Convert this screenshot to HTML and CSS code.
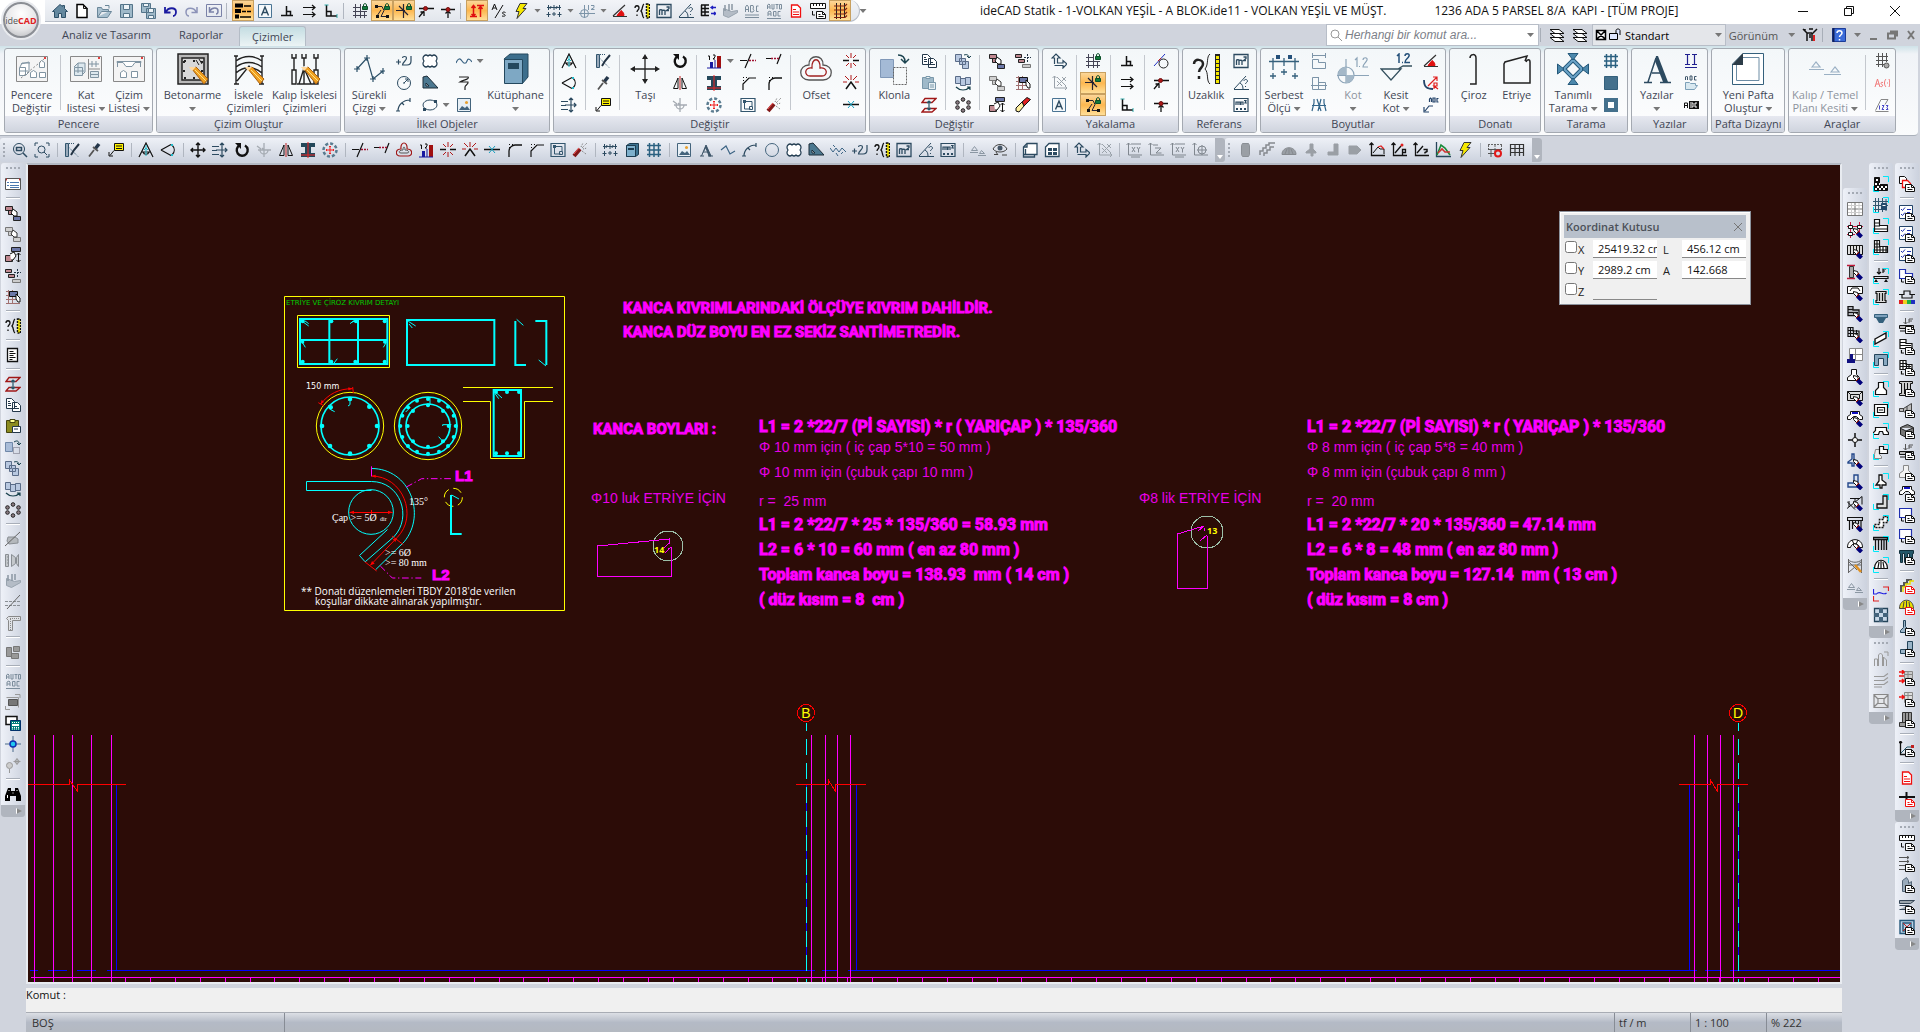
FILE: index.html
```html
<!DOCTYPE html>
<html lang="tr">
<head>
<meta charset="utf-8">
<title>ideCAD Statik</title>
<link rel="stylesheet" href="styles.css">
</head>
<body>
<svg class="defs" aria-hidden="true">
<symbol id="doc" viewBox="0 0 16 16"><path fill="#fff" d="M6.500 8.500h6l3 3v4h-9z"/><path d="M12.500 8.500v3h3M8.500 11.500h2M8.500 13.500h5"/></symbol>
<symbol id="brush" viewBox="0 0 16 16"><path stroke="#00007a" stroke-width="4" d="M10.500 11l4 4"/><path fill="#fff" d="M6.500 6.500l4 1 1 3-2 1-3-3z"/><path stroke="#900" d="M9 12l3-3"/></symbol>
<symbol id="corner" viewBox="0 0 16 16"><path stroke="#00e8f8" d="M10 .5h5.500V6M.5 10v5.500H6"/></symbol>
<symbol id="pencil" viewBox="0 0 32 32"><path fill="#f0a020" stroke="#a86010" d="M15 16l4-2 12 12-4 5z"/><path fill="#ffd9a0" stroke="none" d="M12 14l7 0-4 4z"/><path stroke="#ffe080" d="M18 17l11 11"/></symbol>
<symbol id="home" viewBox="0 0 16 16"><path fill="#64889f" stroke="#2d5068" d="M8 1.500L.5 8.500h2v6h4v-4h3v4h4v-6h2l-3-3V2.500h-2v1z"/></symbol>
<symbol id="new" viewBox="0 0 16 16"><path fill="#fff" stroke="#000" stroke-width="1.500" d="M3 1.500h6l4 4v9H3z"/><path d="M9.500 1.500v4h4"/></symbol>
<symbol id="open" viewBox="0 0 16 16"><path fill="#a9c0cf" stroke="#6a8699" d="M1.500 14V4.500h4l1 2h6v2M1.500 14.500h10l4-6h-10z"/><path stroke="#6a8699" d="M9 2.500h4v3"/></symbol>
<symbol id="save" viewBox="0 0 16 16"><path fill="#9fb9c9" stroke="#55758a" d="M2.500 1.500h12v13h-12z"/><path fill="#eef4f8" stroke="#55758a" d="M5.500 1.500h6v5h-6zM5.500 10.500h6v4h-6z"/></symbol>
<symbol id="saveall" viewBox="0 0 16 16"><path fill="#9fb9c9" stroke="#55758a" d="M1.500.5h9v9h-9zM6.500 5.500h9v10h-9z"/><path fill="#eef4f8" stroke="#55758a" d="M8.500 5.500h5v4h-5zM8.500 12.500h5v3h-5zM3.500.5h5v3h-5z"/></symbol>
<symbol id="undo" viewBox="0 0 16 16"><path stroke="#1a1aa0" stroke-width="1.800" d="M4 9c2-5 10-5 10 0 0 3-2 4-3 4M3 4v5.500h5.500"/></symbol>
<symbol id="redo" viewBox="0 0 16 16"><path stroke="#8c93b8" stroke-width="1.500" d="M12 9C10 4 2 4 2 9c0 3 2 4 3 4M13 4v5.500H7.500"/></symbol>
<symbol id="undobox" viewBox="0 0 16 16"><path stroke="#7a82a8" d="M.5 1.500h15v12H.5z"/><path stroke="#7a82a8" stroke-width="1.500" d="M4 8c2-4 8-4 8 0 0 2-1 3-2 3M3.500 4v5H8"/></symbol>
<symbol id="lines" viewBox="0 0 16 16"><path stroke="#000" stroke-width="4" d="M0 2.500h8M0 8h6M0 13.500h4"/><path stroke="#000" stroke-width="1.500" d="M9 3h7M7 8.500h4M12 8.500h4M5 14h11"/></symbol>
<symbol id="abox" viewBox="0 0 16 16"><path stroke="#4a7494" fill="#f4f8fb" d="M1.500 1.500h13v13h-13z"/><path stroke="#2c4a60" stroke-width="1.400" d="M4.500 12.500L8 4l3.500 8.500M5.500 9.500h5"/></symbol>
<symbol id="perp" viewBox="0 0 16 16"><path stroke="#111" stroke-width="1.500" d="M2 12.500h12M7.500 12V3M8 8.500h3.500V12"/></symbol>
<symbol id="para" viewBox="0 0 16 16"><path stroke="#111" stroke-width="1.200" d="M2 4.500h12M11 2l3 2.500L11 7M2 11.500h12M11 9l3 2.500L11 14"/></symbol>
<symbol id="ortho" viewBox="0 0 16 16"><path stroke="#111" stroke-width="1.500" d="M3.500 2v11H14M3.500 8.500H8V13"/><path stroke="#3aa" d="M1.500 2h4M14 11v4"/></symbol>
<symbol id="lock" viewBox="0 0 16 16"><path fill="#117a3c" stroke="#0b4f28" d="M10.500 3.500h5v3h-5z"/><path stroke="#0b4f28" d="M11.500 3V1.500c0-1 3-1 3 0V3"/></symbol>
<symbol id="gridlock" viewBox="0 0 16 16"><path stroke="#445" d="M3.500 1v14M8.500 1v14M12.500 9v6M1 4.500h8M1 8.500h14M1 12.500h14"/><use href="#lock"/></symbol>
<symbol id="crosslock" viewBox="0 0 16 16"><path stroke="#223" stroke-width="1.200" d="M0 7.500h9M7.500 1v14M3 3l9 9"/><use href="#lock"/></symbol>
<symbol id="nodelock" viewBox="0 0 16 16"><path stroke="#223" d="M2 3.500h6l2 4-3 6h7M3 13l4-6"/><path fill="#111" stroke="none" d="M1 2h3v3H1zM2 12h3v3H2zM12 12h3v3h-3z"/><use href="#lock"/></symbol>
<symbol id="near" viewBox="0 0 16 16"><path stroke="#111" stroke-width="1.300" d="M1 5.500h15M1 14l5-6M2.500 9H6v4"/><circle cx="7.500" cy="5.500" r="2" fill="#b01818" stroke="#701010"/></symbol>
<symbol id="mid" viewBox="0 0 16 16"><path stroke="#111" stroke-width="1.300" d="M1 6.500h14M8 15V8M5.500 10.500L8 8l2.500 2.500"/><circle cx="8" cy="6.500" r="2" fill="#b01818" stroke="#701010"/></symbol>
<symbol id="updown" viewBox="0 0 16 16"><path stroke="#e01010" stroke-width="1.500" d="M4.500 2v11M11.500 3v11M1 13.500h7M8 2.500h7M2.500 5l2-2.500L6.500 5M9.500 6l2-2.500 2 2.500M2.500 11l2 2 2-2"/></symbol>
<symbol id="as" viewBox="0 0 16 16"><path stroke="#111" d="M1 7l2.500-6L6 7M2 5h3M12 2L4 15M14.500 9.500c-3-1.500-4 1-2 1.500s3 3-1.500 2"/></symbol>
<symbol id="bolt" viewBox="0 0 16 16"><path fill="#f6e800" stroke="#333" d="M7 .5h7l-4 5h3l-9 10 2-7H3z"/></symbol>
<symbol id="dim" viewBox="0 0 16 16"><path stroke="#2c4a60" d="M1 4.500h14M2.500 2v5M8 2v5M13.500 2v5M5 3l-1 3M11 3l-1 3"/><path stroke="#2c4a60" d="M2.500 9v5M.5 11.500h4M8 9v4M6 11h4M13.500 9v5M11.500 11.500h4"/></symbol>
<symbol id="level" viewBox="0 0 16 16"><path stroke="#7c94a8" d="M0 10.500h16M5.500 2v13"/><circle cx="5.500" cy="10.500" r="4" stroke="#7c94a8"/><path stroke="#7c94a8" d="M9.500 2v5M12 2.500h3v2l-3 2h3.500"/></symbol>
<symbol id="angred" viewBox="0 0 16 16"><path stroke="#333" stroke-width="1.200" d="M1 13.500h14M1 13L13 2"/><path fill="#e01010" stroke="#e01010" d="M5 12.500l4-5c2 1 3 3 3 5z"/></symbol>
<symbol id="ruler" viewBox="0 0 16 16"><path stroke="#111" stroke-width="1.300" d="M1 5c0-3 4-3 4 0 0 2-2 2-2 4M3 11.500v1.500M10 1C8 2 9 6 7 8c2 2 1 6 3 7"/><path fill="#f6e800" stroke="#111" stroke-width="1.500" stroke-dasharray="2 1" d="M12.500 1h3v14h-3z"/></symbol>
<symbol id="m2" viewBox="0 0 16 16"><path stroke="#2c4a60" stroke-width="1.300" d="M1 1.500h14v13H1zM3.500 12V7.500c0-1 2.500-1 2.500 0V12M6 8c0-1 3-1 3 0v4M10.500 4h2.500v1.500l-2.500 2H13"/></symbol>
<symbol id="angq" viewBox="0 0 16 16"><path stroke="#2c4a60" d="M1 14.500h15M1 14L13 1M7 8c2 1 3 3 3 6M11 6c0-2 3.500-2 3.500 0 0 1.500-2 1.500-2 3M12.500 11v1"/></symbol>
<symbol id="mm2" viewBox="0 0 16 16"><path stroke="#2c4a60" stroke-width="1.200" d="M1 1.500h14v13H1zM3 8V5h2v3M5 5h2v3M8 8V5h2v3M11 3.500h2l-1 2.500h2"/><path stroke="#2c4a60" stroke-width="2" stroke-dasharray="2 2" d="M3 12h11"/></symbol>
<symbol id="listeq" viewBox="0 0 16 16"><path stroke="#111" stroke-width="1.500" d="M1 2h8M1 5.500h8M1 9h8M1 12.500h8M1.500 2v11M5 2v11"/><path stroke="#2020c0" stroke-width="1.300" d="M11 4.500h5M11 10.500h5M13 3l-2 1.500L13 6M14 9l2 1.500-2 1.500"/></symbol>
<symbol id="slab" viewBox="0 0 16 16"><path fill="#b4bcc6" stroke="#98a3ae" d="M1.500 5.500v7l5 2 9-5v-2l-6 1z"/><path stroke="#8b97a3" stroke-width="1.500" d="M3 2v6M7 1v7M10 1v6"/></symbol>
<symbol id="abcu" viewBox="0 0 16 16"><path stroke="#7c8d9c" d="M1.500 9V4l1.500-2 1.500 2v5M1.500 6.500h3M6.500 2.500V9H9L10 7.500 9 6l.5-2L9 2.500zM14.500 3h-2v5.500h2M1 12h14M1 14.500h14"/></symbol>
<symbol id="autoabc" viewBox="0 0 16 16"><path stroke="#7c8d9c" d="M1.500 6V2L3 1l1 1v4M1.500 4H4M6 1v5h2V1M9.500 1.500h3M11 1.500V6M13.500 1.500h2V6h-2zM2 13V9l2-1 1 1v4M2 11h3M7.500 8.500V13H10V8.500zM14.500 8.500H12V13h2.500M1 15.500h14"/></symbol>
<symbol id="docred" viewBox="0 0 16 16"><path stroke="#f01010" fill="#fff" stroke-width="1.300" d="M3.500 2h6l3 3v9h-9z"/><path stroke="#f01010" d="M5 6.500h3M5 9h6M5 11.500h6"/></symbol>
<symbol id="rulerdoc" viewBox="0 0 16 16"><path fill="#fff" stroke="#111" d="M.5.500h15v5H.5z"/><path stroke="#111" d="M3.500 1v2M6.500 1v2M9.500 1v2M12.500 1v2M2.500 8v4H5"/><use href="#doc"/></symbol>
<symbol id="mesh" viewBox="0 0 16 16"><path stroke="#222" d="M4.500 0v16M8.500 0v16M12.500 0v14"/><path stroke="#802010" stroke-width="1.200" d="M2 3h11l2-2M2 7h11l2-2M2 11h11l2-2M2 14.500h11l2-2"/></symbol>
<symbol id="zoomwin" viewBox="0 0 16 16"><circle cx="7" cy="7" r="5.500" stroke="#2c4a60"/><path stroke="#2c4a60" stroke-width="1.500" d="M11 11l4 4M4.500 5.500h5v3h-5z"/></symbol>
<symbol id="zoomext" viewBox="0 0 16 16"><circle cx="7.500" cy="7.500" r="3.500" stroke="#2c4a60"/><path stroke="#2c4a60" d="M10 10l3 3M1 4V1h3M12 1h3v3M1 12v3h3M12 15h3v-3"/></symbol>
<symbol id="pick" viewBox="0 0 16 16"><path stroke="#33566e" fill="#9ab" d="M1.500 1.500h3v13h-3z"/><path stroke="#33566e" stroke-dasharray="1 1" d="M5 1.500h6M5 5.500l9 9"/><path stroke="#234" stroke-width="2" d="M15 2l-5 6-3 5"/></symbol>
<symbol id="dropper" viewBox="0 0 16 16"><path stroke="#24364a" stroke-width="3.500" d="M9 7l4-5"/><path stroke="#555" stroke-width="1.800" d="M8 8l-5 6.500M7 5l5 4"/></symbol>
<symbol id="note" viewBox="0 0 16 16"><path fill="#fff200" stroke="#111" d="M6.500 1.500h9v7h-9z"/><path stroke="#111" d="M8 4h6M8 6.500h6M6 8.500l-4 5M1 10v4h4"/></symbol>
<symbol id="compass" viewBox="0 0 16 16"><path stroke="#111" stroke-width="1.200" d="M1 15L8 1l7 14M4 10l8 0M5 10c1 3 5 3 6 0"/><path stroke="#20b8c8" d="M8 3v11M6 8l2-2 2 2"/></symbol>
<symbol id="cone" viewBox="0 0 16 16"><path stroke="#111" stroke-width="1.200" d="M1 8l10-5.500M1 8l10 5.500M12 3c3 3 3 7 0 10"/><path stroke="#20b8c8" stroke-width="2" d="M12 2v2M12 12v2"/></symbol>
<symbol id="move" viewBox="0 0 16 16"><path stroke="#111" stroke-width="1.400" d="M8 1v14M1 8h14M6 3l2-2 2 2M6 13l2 2 2-2M3 6L1 8l2 2M13 6l2 2-2 2"/></symbol>
<symbol id="movelist" viewBox="0 0 16 16"><path stroke="#2c4a60" stroke-width="1.200" d="M10 1v14M4 8h11M8 3l2-2 2 2M8 13l2 2 2-2M13 6l2 2-2 2"/><path stroke="#2c4a60" d="M0 4.500h7M0 8.500h5M0 12.500h7"/></symbol>
<symbol id="rotate" viewBox="0 0 16 16"><path stroke="#111" stroke-width="2.400" d="M6 3.200A5.500 5.500 0 1 0 11 3.500"/><path fill="#111" stroke="none" d="M1 1h6v6z"/></symbol>
<symbol id="drop" viewBox="0 0 16 16"><path stroke="#a5abb2" stroke-width="1.300" d="M8 1v14M2 8h13M4 8a4 4 0 0 0 8 0M1 4l4 3M6 6l2 2"/></symbol>
<symbol id="mirror" viewBox="0 0 16 16"><path stroke="#111" d="M1.500 13.500L6 3v10.500zM14.500 13.500L10 3v10.500z"/><path stroke="#c02020" d="M8 1v14"/></symbol>
<symbol id="ibeam" viewBox="0 0 16 16"><path fill="#24485a" stroke="none" d="M1 1h14v4H11v6h4v4H1v-4h4V5H1z"/><path stroke="#f02020" d="M8 0v16M1 13h14"/></symbol>
<symbol id="array" viewBox="0 0 16 16"><circle cx="8" cy="8" r="6.500" stroke="#5b7c90" stroke-width="2.500" stroke-dasharray="3 2"/><path stroke="#f02020" d="M8 4v8M4 8h8M7 5l1-1 1 1M7 11l1 1 1-1M5 7L4 8l1 1M11 7l1 1-1 1"/></symbol>
<symbol id="trim" viewBox="0 0 16 16"><path stroke="#111" stroke-width="1.200" d="M0 7.500h7M11 1L5 15"/><path stroke="#a01030" stroke-width="1.500" stroke-dasharray="2 1" d="M9 7.500h7"/></symbol>
<symbol id="extend" viewBox="0 0 16 16"><path stroke="#111" stroke-width="1.200" d="M0 5.500h5M15 1l-4 10"/><path stroke="#a01030" stroke-width="1.500" stroke-dasharray="2 1" d="M5 5.500h8"/></symbol>
<symbol id="offset" viewBox="0 0 16 16"><path stroke="#a01818" stroke-width="1.200" d="M5 7c-1-8 7-8 6 0 6 0 6 7 1 7H4c-5 0-5-7 1-7z"/><path stroke="#555" d="M7 8c0-4 2-4 2 0 4 0 5 3 2 3H5c-3 0-2-3 2-3z"/></symbol>
<symbol id="bars" viewBox="0 0 16 16"><path stroke="#111" d="M2 3h1.500v4M7 2h2v2L7 6h2"/><path fill="#1818a0" stroke="none" d="M4 9h3v6H4z"/><path fill="#a01010" stroke="none" d="M11 3h4v12h-4z"/><path stroke="#1818a0" d="M1 15h14M9 7v8"/></symbol>
<symbol id="burst" viewBox="0 0 16 16"><path stroke="#111" stroke-width="1.300" d="M0 7.500h6M10 7.500h6"/><path stroke="#b01818" d="M8 0v5M8 10v5M3 2l3 3M13 2l-3 3M13 13l-3-3M3 13l3-3"/></symbol>
<symbol id="burst2" viewBox="0 0 16 16"><path stroke="#b01818" d="M8 0v5M2 1l4 4M14 1l-4 4M0 7h4M12 7h4"/><path stroke="#111" stroke-width="1.500" d="M3 14l5-7 5 7"/></symbol>
<symbol id="joinx" viewBox="0 0 16 16"><path stroke="#111" stroke-width="1.300" d="M0 7.500h16"/><path stroke="#18a0c0" d="M5 4l6 7M11 4l-6 7"/></symbol>
<symbol id="fillet" viewBox="0 0 16 16"><path stroke="#111" stroke-width="1.300" d="M3 15V9c0-3 3-6 6-6h7"/><path stroke="#111" stroke-dasharray="1 2" d="M3.500 2v5M3 2.500h6"/></symbol>
<symbol id="chamfer" viewBox="0 0 16 16"><path stroke="#111" stroke-width="1.200" d="M3 15V9l6-6h7"/><path stroke="#111" stroke-dasharray="1 2" d="M3.500 2v5M3 2.500h6"/></symbol>
<symbol id="region" viewBox="0 0 16 16"><path stroke="#33566e" stroke-width="1.200" d="M1 1.500h14v13H1z"/><path stroke="#33566e" d="M4.500 3v9h6M4.500 4.500H12V9"/><path fill="#33566e" stroke="none" d="M3 3h3v3H3z"/><path stroke="#33566e" d="M9.500 9.500h3v3h-3z"/></symbol>
<symbol id="wand" viewBox="0 0 16 16"><path stroke="#801818" stroke-width="4" d="M2 14l6-7"/><path stroke="#f05050" d="M2 12l5-6"/><path stroke="#777" stroke-dasharray="1 1" d="M9 5l2-4M10 6l5-5M11 7l4-1M10 9l4 3"/></symbol>
<symbol id="book" viewBox="0 0 16 16"><path fill="#3c7290" stroke="#1c3c50" d="M2.500 3.500l3-2h9v11l-3 2h-9z"/><path fill="#7eb0cc" stroke="#1c3c50" d="M2.500 3.500h9v11h-9z"/><path fill="#1c3c50" stroke="none" d="M4 6h6v2H4z"/></symbol>
<symbol id="grid" viewBox="0 0 16 16"><path stroke="#2a6080" stroke-width="1.500" d="M3.500 1v14M8 1v14M12.500 1v14M1 3.500h14M1 8h14M1 12.500h14"/></symbol>
<symbol id="picture" viewBox="0 0 16 16"><path fill="#e8f0f6" stroke="#44647c" d="M1.500 1.500h13v13h-13z"/><path fill="#44647c" stroke="none" d="M3 13l3-4 3 2 2-2 3 4z"/><circle cx="10.500" cy="5.500" r="1.500" fill="#e8a030" stroke="none"/></symbol>
<symbol id="ltra" viewBox="0 0 16 16"><path fill="#3c5468" stroke="#3c5468" d="M2 14h4M10 14h5M3.500 14L8 3l5 11h-2L8 6M5.500 10h5"/></symbol>
<symbol id="poly" viewBox="0 0 16 16"><path stroke="#3c6484" stroke-width="1.200" d="M1 8l5-4 4 8 5-3"/></symbol>
<symbol id="arc" viewBox="0 0 16 16"><path stroke="#2c4a60" stroke-width="1.200" d="M2 14C2 8 7 3 14 3M14 1v4M0 14h4M6 6l2 2"/></symbol>
<symbol id="circle" viewBox="0 0 16 16"><circle cx="8" cy="8" r="6.500" stroke="#44647c"/></symbol>
<symbol id="circler" viewBox="0 0 16 16"><circle cx="8" cy="8" r="6.500" stroke="#2c4a60"/><path stroke="#2c4a60" d="M8 8l4-4M9 4h3v3M7 8h2"/></symbol>
<symbol id="cloud" viewBox="0 0 16 16"><path fill="#fff" stroke="#223c50" stroke-width="1.200" d="M2 3q2-2 4 0 2-2 4 0 2-2 4 0 2 2 0 5 2 3 0 5-2 2-4 0-2 2-4 0-2 2-4 0-2-2 0-5-2-3 0-5z"/></symbol>
<symbol id="wedge" viewBox="0 0 16 16"><path fill="#4c7890" stroke="#1c2c38" d="M1 2l4-1 11 12H1z"/><path fill="#dfe7ee" stroke="#1c2c38" d="M4 8l3 3H4z"/></symbol>
<symbol id="zig" viewBox="0 0 16 16"><path stroke="#3c6484" d="M0 6l3 4 3-4 3 4 3-4 4 4M3 3l2 2M11 12l2-2M6 11l2 3"/></symbol>
<symbol id="p21" viewBox="0 0 16 16"><path stroke="#2c4a60" stroke-width="1.200" d="M0 9h5M2.500 6.500v5M6.500 5c0-2 4-2 4 0 0 3-4 4-4 7h4.500M11 12c3 0 4-1 4-4V3"/></symbol>
<symbol id="wave" viewBox="0 0 16 16"><path stroke="#3c6484" stroke-width="1.200" d="M0 10c2-5 4-5 6-2s4 3 5 0 3-2 5 1"/></symbol>
<symbol id="brk" viewBox="0 0 16 16"><path stroke="#222" stroke-width="1.200" d="M3 2h9c2 2-5 3-8 5h8c1 2-3 3-3 5v3"/></symbol>
<symbol id="ellipse" viewBox="0 0 16 16"><ellipse cx="8" cy="8" rx="7" ry="5" stroke="#2c4a60"/><path fill="#2c4a60" stroke="none" d="M12 3h3v3h-3zM1 11h3v3H1z"/></symbol>
<symbol id="section" viewBox="0 0 16 16"><path stroke="#8b97a3" d="M1.500 8.500l3-4 3 4zM0 10.500h8M8 13.500h8M9.500 11.500l2-3 3 3z"/></symbol>
<symbol id="eye" viewBox="0 0 16 16"><path stroke="#444" d="M1 7c3-6 11-6 14 0-3 4-11 4-14 0zM2 12.500h4M4 10l2 3M10 13h5"/><circle cx="8" cy="6" r="2.500" fill="#456" stroke="none"/></symbol>
<symbol id="sheet" viewBox="0 0 16 16"><path fill="#fff" stroke="#2c4a60" stroke-width="1.300" d="M5 1.500h10v11H1.500V5z"/><path stroke="#2c4a60" stroke-width="1.300" d="M3.500 7v6M1.500 13v2h11v-2M5 2v3H2"/></symbol>
<symbol id="sheets" viewBox="0 0 16 16"><path fill="#fff" stroke="#2c4a60" stroke-width="1.300" d="M5 1.500h10v13H1.500V5z"/><path fill="#2c4a60" stroke="none" d="M4 6h4v3H4zM9 6h4v3H9zM4 10h4v3H4zM9 10h4v3H9z"/></symbol>
<symbol id="axes" viewBox="0 0 16 16"><path stroke="#2c4a60" stroke-width="1.200" d="M3.500 11V5H1L5 1l4 4H6.500M6.500 5v5H12V7.500L16 11l-4 4v-2.500H3.500"/></symbol>
<symbol id="axhatch" viewBox="0 0 16 16"><path stroke="#9aa2aa" d="M3.500 1v12H16M1.500 3l2-2 2 2M6 2l9 9M15 2l-9 9M6 6l5 5M11 2l4 4M14 11l2 2-2 2"/></symbol>
<symbol id="axtxt" viewBox="0 0 16 16"><path stroke="#80878f" d="M2.500 1v12H16M.5 3l2-2 2 2M5 2h10M6 5l3 5M9 5l-3 5M11 5l1.500 2.500L14 5M12.500 7v3.500M5 15h9"/></symbol>
<symbol id="axz" viewBox="0 0 16 16"><path stroke="#80878f" d="M2.500 1v12H16M.5 3l2-2 2 2M5 3h5M7 6h6l-5 5h5.500"/></symbol>
<symbol id="axglobe" viewBox="0 0 16 16"><path stroke="#80878f" d="M2.500 1v12H16M.5 3l2-2 2 2M5 8h10M10 3v10"/><circle cx="10" cy="8" r="4" stroke="#80878f"/></symbol>
<symbol id="gcyl" viewBox="0 0 16 16"><path fill="#9a9fa5" stroke="#8a8f95" d="M5.500 1.500h6l1 2v9l-1 2h-6l-1-2v-9z"/></symbol>
<symbol id="gstair" viewBox="0 0 16 16"><path stroke="#85898e" stroke-width="1.500" d="M1 13V9h3V6h3V3h3V1h6M5 14v-3h3V8h3V5h4"/></symbol>
<symbol id="gdome" viewBox="0 0 16 16"><path fill="#9a9fa5" stroke="#85898e" d="M1 12.500c0-9 14-9 14 0zM4 12l2-5M8 12V6M12 12l-2-5"/></symbol>
<symbol id="gwall" viewBox="0 0 16 16"><path fill="#9a9fa5" stroke="#9a9fa5" d="M7 2h3v5l3 3v1h-3v3H8v-3H3v-1l4-3z"/></symbol>
<symbol id="gell" viewBox="0 0 16 16"><path fill="#9a9fa5" stroke="#9a9fa5" d="M9 2h4v11H3v-3h6z"/></symbol>
<symbol id="gtag" viewBox="0 0 16 16"><path fill="#9a9fa5" stroke="#9a9fa5" d="M2 4h8l4 4-4 4H2z"/></symbol>
<symbol id="axgraph" viewBox="0 0 16 16"><path stroke="#111" stroke-width="1.300" d="M2.500 1v12.500H16M.5 3l2-2 2 2"/><path stroke="#111" d="M4 11l5-6 2 2h4v5"/><path stroke="#e02020" stroke-width="1.200" d="M9 5l3-1 3 3"/></symbol>
<symbol id="axp" viewBox="0 0 16 16"><path stroke="#111" stroke-width="1.300" d="M2.500 1v12.500H16M.5 3l2-2 2 2M4 11l6-7M11.500 13V7.500h3v3h-3"/><circle cx="11" cy="3" r="1.500" fill="#e02020" stroke="none"/></symbol>
<symbol id="axq" viewBox="0 0 16 16"><path stroke="#111" stroke-width="1.300" d="M2.500 1v12.500H16M.5 3l2-2 2 2M4 11l6-7"/><path stroke="#111" stroke-width="1.500" d="M10.500 7.500h3.500v2l-2 1v1"/></symbol>
<symbol id="chart" viewBox="0 0 16 16"><path stroke="#26445a" stroke-width="1.300" d="M1.500 0v14.500H16"/><path stroke="#1a8a3a" stroke-width="1.600" d="M2 13L6 3l4 3 5 7"/><path stroke="#d03030" stroke-width="1.600" d="M3 11l4-4 3 3h5"/></symbol>
<symbol id="calx" viewBox="0 0 16 16"><path stroke="#666" stroke-dasharray="2 1" d="M1 2.500h14M1.500 3v5M14.500 3v5M8 3v4"/><path stroke="#555" d="M1 7.500h14M1 11.500h6M4 7v8M8 7v4"/><circle cx="11" cy="11.500" r="3" stroke="#e01818" stroke-width="2"/></symbol>
<symbol id="tbl" viewBox="0 0 16 16"><path stroke="#333" stroke-width="1.200" d="M1.500 14V2.500h13V14M1 6.500h14M1 10.500h14M6 3v11M10.500 3v11"/></symbol>
<symbol id="layers" viewBox="0 0 16 16"><path fill="#fff" stroke="#111" d="M1 10.500h9l5 4H6zM1 6.500h9l5 4H6zM1 2.500h9l5 4H6z"/></symbol>
<symbol id="lockx" viewBox="0 0 12 16"><path stroke="#000" stroke-width="1.500" fill="#fff" d="M1.500 3.500h9v9h-9zM2 4l8 8M10 4l-8 8"/></symbol>
<symbol id="unlock" viewBox="0 0 12 16"><path stroke="#000" fill="#dfe8ff" d="M.5 6.500h8v6h-8zM7 6V3.500c0-2 4-2 4 0V8"/></symbol>
<symbol id="toolset" viewBox="0 0 16 16"><path stroke="#111" stroke-width="1.500" d="M1 2l4 4v8M15 2l-5 5v7M5 6h5M7 2h4M3 2v3M8 7v4"/><path stroke="#e02020" stroke-width="2" d="M12 8v6"/></symbol>
<symbol id="help" viewBox="0 0 16 16"><path fill="#3c6cd8" stroke="#1c3c98" d="M1.500 1.500h13v13h-13z"/><path stroke="#10205a" stroke-width="2" d="M2.500 1v14"/><path stroke="#fff" stroke-width="1.500" d="M6 6c0-3 5-3 5 0 0 2-2.500 2-2.500 4M8.500 12v1.500"/></symbol>
<symbol id="copy" viewBox="0 0 16 16"><path fill="#fff" stroke="#24384a" d="M1.500 1.500h5l3 3v7h-8zM7.500 5.500h5l3 3v6h-8z"/><path stroke="#24384a" d="M9 9.500h3M9 11.500h5M3 4.500h2M3 6.500h3M3 8.500h3"/></symbol>
<symbol id="paste" viewBox="0 0 16 16"><path fill="#9fb9c9" stroke="#7a98aa" d="M1.500 2.500h11v11h-11z"/><path fill="#e8f0f4" stroke="#7a98aa" d="M5 1.500h4v2H5zM7.500 7.500h7v7h-7zM9 10h4M9 12h4"/></symbol>
<symbol id="pastec" viewBox="0 0 16 16"><path fill="#8c8c20" stroke="#444410" d="M1.500 2.500h12v12h-12z"/><path fill="#ffff90" stroke="#444410" d="M5 1.500h5v3H5z"/><path fill="#fff" stroke="#24384a" d="M7.500 8.500h8v6h-8zM9 11h4"/></symbol>
<symbol id="floors" viewBox="0 0 16 16"><path stroke="#a01818" stroke-width="1.300" d="M1 5.500l3-4h11l-4 4zM1 15l3-3.500h11L11 15z"/><path stroke="#24586a" stroke-width="1.200" d="M8 4v9M6 6l2-2 2 2M6 11l2 2 2-2"/></symbol>
<symbol id="clone" viewBox="0 0 16 16"><path fill="#a8bcd8" stroke="#7088a8" d="M.5 3.500h7v9h-7z"/><path stroke="#667" stroke-dasharray="1 1" d="M8.500 8.500h6v6h-6z"/><path stroke="#1c4450" d="M9 3c3-2 5-1 5 2M12 4l2 2 2-2"/></symbol>
<symbol id="clones" viewBox="0 0 16 16"><path fill="#b8c8e0" stroke="#5a6c88" d="M.5 1.500h6v7h-6zM4.500 5.500h6v6h-6zM7.500 8.500h6v7h-6z"/><path stroke="#1c4450" d="M9 2c3-1 5 0 5 3M12 3l2 2 2-2"/></symbol>
<symbol id="clonec" viewBox="0 0 16 16"><path fill="#b8c8e0" stroke="#5a6c88" d="M.5 1.500h5v7h-5zM5.500 3.500h5v7h-5zM10.500 2.500h5v7h-5z"/><path stroke="#1c4450" stroke-width="1.200" d="M1 12c4 4 10 4 14 0M15 15v-3h-3"/></symbol>
<symbol id="ring" viewBox="0 0 16 16"><g fill="#8c7c84" stroke="#222"><circle cx="8" cy="2.500" r="1.800"/><circle cx="8" cy="13.500" r="1.800"/><circle cx="2.500" cy="5.500" r="1.800"/><circle cx="13.500" cy="5.500" r="1.800"/><circle cx="2.500" cy="10.500" r="1.800"/><circle cx="13.500" cy="10.500" r="1.800"/></g></symbol>
<symbol id="sel" viewBox="0 0 16 16"><path fill="#c08890" stroke="#222" d="M.5 1.500h7v4h-7zM3.500 5.500h6v4h-6z"/><path fill="#6c78a8" stroke="#222" d="M8.500 11.500h7v4h-7z"/><path fill="#fff" stroke="#111" d="M8 4l4 3v4H9L6 8z"/></symbol>
<symbol id="selg" viewBox="0 0 16 16"><path fill="#d0d0d0" stroke="#777" d="M.5 1.500h7v4h-7zM3.500 5.500h6v4h-6zM8.500 11.500h7v4h-7z"/><path fill="#fff" stroke="#333" d="M8 4l4 3v4H9L6 8z"/></symbol>
<symbol id="selup" viewBox="0 0 16 16"><path fill="#6c78a8" stroke="#222" d="M6.500.5h9v4h-9z"/><path fill="#c08890" stroke="#222" d="M.5 8.500h7v6h-7z"/><path fill="#fff" stroke="#111" d="M5 7l4-2 2 4-3 4H6"/><path stroke="#111" d="M13.500 6v9M11.500 8l2-2 2 2M11.500 13l2 2 2-2"/></symbol>
<symbol id="seladd" viewBox="0 0 16 16"><path fill="#c08890" stroke="#222" d="M.5 1.500h6v3h-6zM3.500 6.500h6v3h-6z"/><path fill="#ccc" stroke="#777" d="M7.500 11.500h8v3h-8z"/><path stroke="#234" stroke-dasharray="2 1" d="M12.500 1v8M9 4.500h7"/></symbol>
<symbol id="selgrid" viewBox="0 0 16 16"><path stroke="#a07070" d="M1 2.500h10M1 6.500h12M1 10.500h12M1 14.500h14M3.500 1v14M7.500 1v14"/><path fill="#6c78a8" stroke="#111" d="M4.500 2.500h8v5h-8z"/><path fill="#fff" stroke="#111" d="M11 5l4 4v4h-2l-2-3z"/></symbol>
<symbol id="eraser" viewBox="0 0 16 16"><path fill="#e02020" stroke="#111" d="M7 5l5-4.500 3.500 2L9 9z"/><path fill="#fff0a0" stroke="#111" d="M1 11l6-6 2 4-5 6-3-1z"/></symbol>
<symbol id="tangent" viewBox="0 0 16 16"><path stroke="#2030c0" d="M1 13L12 1"/><circle cx="10.500" cy="10.500" r="4.500" stroke="#222"/><path stroke="#c02020" d="M5 8l3-3"/></symbol>
<symbol id="dimbox" viewBox="0 0 16 16"><path stroke="#7c94a8" d="M1 2.500h14M1.500 0v5M14.500 0v5M1.500 6.500h6v3h7v6h-13z"/></symbol>
<symbol id="dimboxh" viewBox="0 0 16 16"><path stroke="#7c94a8" d="M1.500 2.500h6v5h7v7h-13zM0 10.500h16M7.500 2v12"/></symbol>
<symbol id="dimsk" viewBox="0 0 16 16"><path stroke="#33668a" stroke-width="1.200" d="M1 8.500h14M3 2v4l-2 8M6 2l4 12M10 2l-3 12M13 2v4l2 8"/></symbol>
<symbol id="radius" viewBox="0 0 16 16"><path stroke="#24446a" stroke-width="1.800" d="M1 5c0 7 3 9 9 9"/><path stroke="#e02020" stroke-width="1.200" d="M5 11l9-9M14 6V2h-4M11 14V8h3v3h-3l4 3"/></symbol>
<symbol id="leader" viewBox="0 0 16 16"><path stroke="#24446a" stroke-width="1.200" d="M2 14l4-5h4M1 10v5h5M6.500 5V2l1-1 1 1v3M10 1v4h2V1zM15.500 1.500H14V5h1.500"/></symbol>
<symbol id="fill" viewBox="0 0 16 16"><path fill="#44708c" stroke="#34607c" d="M1.500 1.500h13v13h-13z"/></symbol>
<symbol id="fillo" viewBox="0 0 16 16"><path fill="#fff" stroke="#44708c" stroke-width="4" d="M3 3h10v10H3z"/></symbol>
<symbol id="ii" viewBox="0 0 16 16"><path stroke="#202090" stroke-width="1.200" d="M2 1.500h5M9 1.500h5M4.500 2v9M11.500 2v9M2 11.500h5M9 11.500h5M2 14.500h12"/></symbol>
<symbol id="abcfile" viewBox="0 0 16 16"><path stroke="#3c5468" d="M2.500 5V2l1-1 1 1v3M7 1v4h2V1zM13.500 1.500h-2V5h2"/><path stroke="#7ca0b8" fill="#d8e8f0" d="M2.500 14.500v-7h4l1 1h5v2h2l-3 4z"/></symbol>
<symbol id="ae" viewBox="0 0 16 16"><path stroke="#111" d="M1.500 11V6h3v5M1.500 8.500h3"/><path fill="#111" stroke="none" d="M6 4h10v8H6z"/><path stroke="#fff" d="M7 6h3v4H7M7 8h2M14 6h-2v4h2"/></symbol>
<symbol id="gridc" viewBox="0 0 16 16"><path stroke="#555" d="M4.500 0v14M8.500 0v14M12.500 0v9M2 3.500h12M2 7.500h12M2 11.500h8"/><circle cx="12.500" cy="12.500" r="2.500" fill="#aaa" stroke="#555"/></symbol>
<symbol id="asr" viewBox="0 0 16 16"><path stroke="#f07878" d="M1 12l2.500-8L6 12M2 9h3M9 7.500c-3-1-2 2-1 2s1 3-1.500 2M12 4c-2 2-2 6 0 8M13 8h1M15 4c1 2 1 6 0 8"/></symbol>
<symbol id="n123" viewBox="0 0 16 16"><path stroke="#888" d="M1.500 13.500L7 2.500h7l-3 5M1.500 14.500h13"/><path stroke="#4848c8" d="M5.500 8.500v4M8 8.500h2l-2 4h2M12 8.500h2l-1 2 1 2h-2"/></symbol>
<symbol id="props" viewBox="0 0 16 16"><path fill="#fff" stroke="#555" d="M.5 2.500h15v11H.5z"/><path stroke="#4a78b0" d="M5 6.500h9M5 9.500h9M5 11.500h9M2 6.500h2M2 9.500h2"/><path stroke="#c03030" stroke-width="2" d="M1 3.500h14" stroke-dasharray="1 12 1"/></symbol>
<symbol id="textdoc" viewBox="0 0 16 16"><path fill="#fff" stroke="#111" stroke-width="1.300" d="M2.500 1.500h10v13h-10z"/><path stroke="#111" d="M4.500 4.500h4M4.500 6.500h6M4.500 8.500h4M4.500 10.500h6M4.500 12.500h3"/></symbol>
<symbol id="gbeam" viewBox="0 0 16 16"><path fill="#b4b8bc" stroke="#8a8f94" d="M3 6h7l3 2v4l-9 1-2-3z"/><path stroke="#666" d="M0 15L15 1"/></symbol>
<symbol id="gcols" viewBox="0 0 16 16"><path stroke="#8a8f94" fill="#c4c8cc" d="M.5 2.500h3v12h-3zM6.500 2.500l4 3v6l-4 3zM13.500 2.500v12l-2-3v-6zM2 5h1M2 8h1M2 11h1"/></symbol>
<symbol id="gline" viewBox="0 0 16 16"><path stroke="#8a8f94" stroke-dasharray="3 1" d="M0 7.500h15M0 11.500h15"/><path stroke="#666" d="M2 15L15 1"/></symbol>
<symbol id="ggamma" viewBox="0 0 16 16"><path fill="#e0e2e6" stroke="#888" d="M3.500 15.500v-10l-2-2 2-2h12v4h-8v10z"/><path stroke="#888" stroke-dasharray="1 1" d="M5.500 4v11M5 3.500h10"/></symbol>
<symbol id="gblocks" viewBox="0 0 16 16"><path fill="#999" stroke="#777" d="M1.500 3.500h5v9h-5zM8.500 2.500h6v5h-6zM6.500 9.500h7v5h-7z"/></symbol>
<symbol id="gframe" viewBox="0 0 16 16"><path fill="#777" stroke="#555" d="M3.500 5.500h9v6h-9z"/><path stroke="#999" d="M1.500 3.500h12v10M10 .5h5V4M.5 12v3.500H5"/></symbol>
<symbol id="calc" viewBox="0 0 16 16"><path stroke="#111" stroke-width="1.500" fill="#fff" d="M1 1.500h11v8H1z"/><path fill="#007a7a" stroke="#00306a" d="M5.500 5.500h10v10h-10z"/><path stroke="#fff" stroke-dasharray="1 1" d="M7 7.500h7M7 12.500h7M7 14h7"/><path fill="#fff" stroke="none" d="M7 9h7v2H7z"/></symbol>
<symbol id="target" viewBox="0 0 16 16"><path stroke="#4a6a8a" d="M0 8h16M8 0v16"/><circle cx="8" cy="8" r="3" fill="#20c8f0" stroke="#1030b0" stroke-width="1.500"/></symbol>
<symbol id="gpin" viewBox="0 0 16 16"><circle cx="4.500" cy="8.500" r="3" fill="#ccc" stroke="#999"/><path stroke="#999" d="M4.500 12v4M12 1v7M8.500 4.500h7"/><circle cx="12" cy="4.500" r="2" stroke="#999"/></symbol>
<symbol id="binoc" viewBox="0 0 16 16"><path fill="#000" stroke="none" d="M3 2h3v3h4V2h3l3 8v5h-5v-5H5v5H0v-5z"/><path stroke="#fff" d="M2.500 9v3M4 4v1M12 4v1M7.500 7h1"/></symbol>
<symbol id="gtbl" viewBox="0 0 16 16"><path fill="#fff" stroke="#777" d="M.5 1.500h15v13H.5zM.5 8h15M8 1v14"/><path stroke="#ccc" d="M4.500 2v12M12 2v12M1 4.500h14M1 11.500h14"/></symbol>
<symbol id="b-rednodes" viewBox="0 0 16 16"><path stroke="#d01840" d="M3.500 0v16M12.500 0v12M0 4.500h16M0 12.500h8"/><path fill="#fff" stroke="#111" d="M1.500 3.500h4v3h-4zM10.500 3.500h4v3h-4zM1.500 10.500h4v3h-4z"/><use href="#brush"/></symbol>
<symbol id="b-panel" viewBox="0 0 16 16"><path fill="#ddd" stroke="#111" d="M.5 2.500h15v9H.5zM3.500 3v8M6.500 3v8M9.500 3v8M12.500 3v8"/><use href="#brush"/></symbol>
<symbol id="b-col" viewBox="0 0 16 16"><path stroke="#c01838" stroke-width="1.400" d="M0 1.500h8M0 14.500h8"/><path fill="#aaa" stroke="#333" d="M2.500 2.500h4v11h-4z"/><use href="#brush"/></symbol>
<symbol id="b-beam" viewBox="0 0 16 16"><path fill="#fff" stroke="#111" d="M.5 1.500h15v7H.5zM3 6l2-3h6l2 3"/><use href="#brush"/></symbol>
<symbol id="b-slab" viewBox="0 0 16 16"><path stroke="#111" stroke-width="1.300" d="M1 .5v9h11V4H6V.5zM1 3.500h5M1 6.500h10"/><use href="#brush"/></symbol>
<symbol id="b-slabg" viewBox="0 0 16 16"><path stroke="#111" stroke-width="1.200" d="M1 .5v9h11V4H6V.5zM1 3.500h5M1 6.500h10M3.500 0v9M6.500 3v6M9.500 3v6"/><use href="#brush"/></symbol>
<symbol id="b-found" viewBox="0 0 16 16"><path fill="#fff" stroke="#888" d="M2.500.5h13v12h-13zM2 6.500h13M8.500 0v12"/><path fill="#101080" stroke="none" d="M3 6h3v5h2v4H0v-4h3z"/></symbol>
<symbol id="b-foot" viewBox="0 0 16 16"><path fill="#fff" stroke="#111" d="M4.500.5h5v5l3 3v3H.5v-3l4-3z"/><use href="#brush"/></symbol>
<symbol id="b-pad" viewBox="0 0 16 16"><path fill="#ddd" stroke="#111" d="M.5 1.500h15v9H.5zM3.500 4.500h9v4h-9zM.5 1.500l3 3M15.500 1.500l-3 3"/><use href="#brush"/></symbol>
<symbol id="b-strip" viewBox="0 0 16 16"><path fill="#fff" stroke="#111" d="M3.500.5h9v3l3 2v3h-3l-3-3h-3l-3 3h-3v-3l3-2z"/><path fill="#1010c0" stroke="none" d="M5 1h6v2H5z"/><use href="#brush"/></symbol>
<symbol id="node" viewBox="0 0 16 16"><path stroke="#111" stroke-width="1.500" d="M8 1v14M1 8h14"/><circle cx="8" cy="8" r="2.500" fill="#fff" stroke="#111"/></symbol>
<symbol id="b-wall" viewBox="0 0 16 16"><path stroke="#24488a" stroke-width="1.400" fill="#dbe4f0" d="M5 1h2v5l3 4H7v3H5v-3H1V9l4-3z"/><use href="#brush"/></symbol>
<symbol id="b-lwall" viewBox="0 0 16 16"><path stroke="#24488a" stroke-width="1.400" fill="#dbe4f0" d="M7 1h4v12H1V9h6z"/><use href="#brush"/></symbol>
<symbol id="b-truss" viewBox="0 0 16 16"><path stroke="#111" d="M0 13.500l15-12v8M3 3.500h9M0 6.500l8 8M2 12V6M8 3v10"/><use href="#brush"/></symbol>
<symbol id="b-curt" viewBox="0 0 16 16"><path stroke="#111" stroke-width="1.200" d="M.5 1.500h15v3H.5zM2.500 4v10M5.500 4v9M8.500 4v5M11.500 4v4M14 4v9"/><use href="#brush"/></symbol>
<symbol id="b-dome" viewBox="0 0 16 16"><path fill="#fff" stroke="#111" d="M.5 10.500C0 0 16 0 15.500 10.500l-3 0c-1-5-8-5-9 0zM5 3l2 4M11 3l-2 4"/><use href="#brush"/></symbol>
<symbol id="b-scaf" viewBox="0 0 16 16"><path stroke="#666" d="M1.500 1v14M14.500 1v14M1 2c5 3 9 3 14 0M1 7l14 0M2 14L14 4M2 4l8 8"/><path stroke="#e09020" stroke-width="2.500" d="M8 7l6 7"/></symbol>
<symbol id="c-chk" viewBox="0 0 16 16"><path fill="#111" stroke="#111" d="M1.500 1.500h5v7h8v6h-13z"/><path stroke="#fff" stroke-width="2" stroke-dasharray="2 2" d="M3 4h3M2 8h5M4 11h10M2 13h12"/><use href="#corner"/></symbol>
<symbol id="c-mesh" viewBox="0 0 16 16"><path stroke="#33566e" d="M2.500 1v14M5.500 1v14M9.500 1v14M0 4.500h15M0 8.500h15M0 12.500h14M13 2v12"/><path fill="#24486a" stroke="#24486a" d="M8.500 6.500h5v6h-5z"/><path stroke="#fff" d="M9.500 8.500h3"/><use href="#corner"/></symbol>
<symbol id="c-slab" viewBox="0 0 16 16"><path fill="#fff" stroke="#111" stroke-width="1.200" d="M1.500 1.500h5v6h8v6h-13zM1 5h5M1 8h6M1 11h14"/><use href="#corner"/></symbol>
<symbol id="c-slabg" viewBox="0 0 16 16"><path fill="#fff" stroke="#111" stroke-width="1.200" d="M1.500 1.500h5v6h8v6h-13zM1 5h5M1 8h6M1 11h14M4 1v12M7 7v6M10 7v6M13 7v6"/><use href="#corner"/></symbol>
<symbol id="c-load" viewBox="0 0 16 16"><path stroke="#111" stroke-width="1.200" d="M6 0v6M4 4l2 2 2-2M10 5V1h3M10 3h2M1 8.500h14v2H1z"/><path fill="#111" stroke="none" d="M1 14l2-3 2 3zM11 14l2-3 2 3z"/><use href="#corner"/></symbol>
<symbol id="c-col" viewBox="0 0 16 16"><path fill="#ddd" stroke="#111" stroke-width="1.200" d="M3 2.500h10v2h-1v7h1v2H3v-2h1v-7H3zM6.500 4v8M9.500 4v8"/><use href="#corner"/></symbol>
<symbol id="c-cap" viewBox="0 0 16 16"><path fill="#7ca0bc" stroke="#34607c" d="M1.500 4.500h13v3h-13z"/><path fill="#34607c" stroke="none" d="M3 8h10l-3 5H6z"/></symbol>
<symbol id="c-plate" viewBox="0 0 16 16"><path fill="#fff" stroke="#111" stroke-width="1.400" d="M2 8l11-6v5L2 13z"/><use href="#corner"/></symbol>
<symbol id="c-arch" viewBox="0 0 16 16"><path fill="#88a8c0" stroke="#24445a" d="M1.500 2.500h13v11h-4v-7h-5v7h-4z"/><use href="#corner"/></symbol>
<symbol id="c-foot" viewBox="0 0 16 16"><path fill="#fff" stroke="#111" stroke-width="1.200" d="M5.500 1.500h5v5l3 3v4h-11v-4l3-3z"/><use href="#corner"/></symbol>
<symbol id="c-pad" viewBox="0 0 16 16"><path fill="#fff" stroke="#111" stroke-width="1.200" d="M1.500 2.500h13v11h-13zM4.500 5.500h7v5h-7zM6 8h4"/><use href="#corner"/></symbol>
<symbol id="c-strip" viewBox="0 0 16 16"><path fill="#fff" stroke="#111" stroke-width="1.200" d="M2.500 4.500h11v3l2 2v2h-5l-1-3h-3l-1 3h-5v-2l2-2z"/><use href="#corner"/></symbol>
<symbol id="c-l" viewBox="0 0 16 16"><path stroke="#888" fill="#eee" d="M2.500 5.500h4v5l2 2v2h-7v-4z"/><path fill="#fff" stroke="#111" stroke-width="1.200" d="M6.500 2.500h4v3h4v4h-8z"/><use href="#corner"/></symbol>
<symbol id="c-wall" viewBox="0 0 16 16"><path fill="#fff" stroke="#111" stroke-width="1.300" d="M6 2h3v5l4 3v2H9v3H7v-3H3l3-4z"/><use href="#corner"/></symbol>
<symbol id="c-lwall" viewBox="0 0 16 16"><path fill="#ddd" stroke="#111" stroke-width="1.300" d="M10 2h4v12H4v-4h6z"/><use href="#corner"/></symbol>
<symbol id="c-stairs" viewBox="0 0 16 16"><path fill="#fff" stroke="#111" stroke-width="1.500" stroke-dasharray="2 1" d="M1.500 9.500h5v-5h4v-3h4v6h-4v5h-9z"/><use href="#corner"/></symbol>
<symbol id="c-curt" viewBox="0 0 16 16"><path stroke="#111" stroke-width="1.300" d="M.5 1.500h14v2H.5zM2.500 3v11M5.500 3v11M8.500 3v11M11 3v11M13.500 3v11"/><use href="#corner"/></symbol>
<symbol id="c-dome" viewBox="0 0 16 16"><path fill="#fff" stroke="#111" stroke-width="1.200" d="M1.500 11.500c0-11 13-11 13 0zM5 11l1-6M8 11V4M11 11l-1-6"/><use href="#corner"/></symbol>
<symbol id="c-sect" viewBox="0 0 16 16"><path stroke="#e02020" stroke-width="1.200" d="M10 1h5.500v4M.5 10v5H6"/><path stroke="#2020e0" stroke-width="1.200" d="M.5 3v5h3c3-4 7 2 10-1"/></symbol>
<symbol id="c-tiles" viewBox="0 0 16 16"><path fill="#c8d8e8" stroke="#24445a" stroke-width="1.300" d="M1.500 1.500h13v13h-13z"/><path fill="#44647c" stroke="none" d="M6 1h4v5H6zM1 6h5v4H1zM6 10h4v5H6zM10 6h5v4h-5z"/></symbol>
<symbol id="g-city" viewBox="0 0 16 16"><path stroke="#999" d="M1.500 15V8h3v7M5.500 15V4l2-2 2 2v11M10.500 15V6l3 3v6M11 1h4v4"/></symbol>
<symbol id="g-floors" viewBox="0 0 16 16"><path stroke="#999" stroke-width="1.200" d="M1 4.500h10l4-3M1 8.500h10l4-3M1 12.500h10l4-3M1 15h8"/></symbol>
<symbol id="g-pad" viewBox="0 0 16 16"><path fill="#e4e6ea" stroke="#888" stroke-width="1.200" d="M1 1.500h14v13H1zM5 5.500h6v5H5zM1 2l4 4M15 2l-4 4M1 14l4-4M15 14l-4-4"/></symbol>
<symbol id="d-redc" viewBox="0 0 16 16"><path fill="#fff" stroke="#111" d="M.5.500h5l2 2v5h-7z"/><path fill="#fff" stroke="#f01010" stroke-width="1.300" d="M3.500 4.500h5l3 3v4h-8z"/><use href="#doc"/></symbol>
<symbol id="d-chk" viewBox="0 0 16 16"><path fill="#fff" stroke="#24446a" d="M.5.500h13v13H.5z"/><path stroke="#2030b0" d="M2 4l1.500 1.500L6 2.500M8 4.500h4M2 9l1.500 1.500L6 7.500M8 7.500h3"/><use href="#doc"/></symbol>
<symbol id="d-poly" viewBox="0 0 16 16"><path fill="#fff" stroke="#2030b0" stroke-width="1.200" d="M.5 1.500h6v4h7v5h-13z"/><path stroke="#111" d="M2.500 11v3H5"/><use href="#doc"/></symbol>
<symbol id="d-rain" viewBox="0 0 16 16"><path stroke="#111" stroke-width="1.200" d="M0 5.500h5V2h6v3.500h5M3 5v4h10V5"/><path fill="#e02020" stroke="none" d="M0 11h4v4H0z"/><path fill="#f0d020" stroke="none" d="M4 11h4v4H4z"/><path fill="#20b040" stroke="none" d="M8 11h4v4H8z"/><path fill="#2030c0" stroke="none" d="M12 11h4v4h-4z"/></symbol>
<symbol id="d-load" viewBox="0 0 16 16"><path stroke="#555" d="M6.500 0v6M4.500 4l2 2 2-2M10 5V1h4M10 3h3"/><path fill="#bbb" stroke="#111" d="M.5 7.500h14v3H.5zM1 13h5"/><use href="#doc"/></symbol>
<symbol id="d-slab" viewBox="0 0 16 16"><path fill="#fff" stroke="#111" stroke-width="1.200" d="M1 .5h6v4h6v5H1zM1 3.500h6M1 6.500h11M2.500 11v3H5"/><use href="#doc"/></symbol>
<symbol id="d-grid" viewBox="0 0 16 16"><path fill="#fff" stroke="#111" stroke-width="1.200" d="M1 .5h6v4h6v5H1zM1 3.500h6M1 6.500h11M4 0v9M7.500 3v6M10 4v5M2.500 11v3H5"/><use href="#doc"/></symbol>
<symbol id="d-col" viewBox="0 0 16 16"><path fill="#ccc" stroke="#111" d="M.5.500h13v2h-2v10h2v2H.5v-2h2v-10h-2zM5.500 2v11M8.500 2v11"/><use href="#doc"/></symbol>
<symbol id="d-horn" viewBox="0 0 16 16"><path fill="#bbb" stroke="#444" d="M.5 6.500h4l8-5v12l-8-4h-4zM4.500 6v4M8 4v7"/><use href="#doc"/></symbol>
<symbol id="d-cube" viewBox="0 0 16 16"><path fill="#777" stroke="#222" d="M1.500 4.500l7-3 6 3v7l-7 3-6-3zM1 5l6 3 7-3M7.500 8v6"/><use href="#doc"/></symbol>
<symbol id="d-foot" viewBox="0 0 16 16"><path fill="#f2f2f2" stroke="#888" d="M4.500.5h5v5l3 3v4H.5v-4l4-3z"/><use href="#doc"/></symbol>
<symbol id="d-strip" viewBox="0 0 16 16"><path fill="#fff" stroke="#111" d="M3.500.5h9v3l3 2v3h-3l-3-3h-3l-3 3h-3v-3l3-2z"/><path fill="#1010c0" stroke="none" d="M5 1h6v2H5z"/><use href="#doc"/></symbol>
<symbol id="d-box" viewBox="0 0 16 16"><path fill="#fff" stroke="#2030b0" stroke-width="1.200" d="M.5 1.500h12v9H.5z"/><path stroke="#111" d="M2.500 11v3H5"/><use href="#doc"/></symbol>
<symbol id="d-gate" viewBox="0 0 16 16"><path fill="#24586a" stroke="#12303c" d="M.5 1.500h14v3h-1v9h-3v-9h-2v9h-3v-9h-2v9h-2v-9h-1z"/><use href="#doc"/></symbol>
<symbol id="d-ystair" viewBox="0 0 16 16"><path stroke="#555" stroke-width="2" d="M2 14V8h3V5h3V2h5"/><path stroke="#e8e000" stroke-width="1.500" d="M4 14V9h3V6h4V3h4"/><use href="#doc" stroke="#f01010"/></symbol>
<symbol id="d-ydome" viewBox="0 0 16 16"><path fill="#e8e000" stroke="#444" d="M.5 9.500c0-11 14-11 14 0zM4 9l1-6M7.500 9V2M11 9l-1-6"/><use href="#doc" stroke="#f01010"/></symbol>
<symbol id="d-wall" viewBox="0 0 16 16"><path fill="#9ab4c8" stroke="#24445a" d="M4.500.5h2v6l4 4v2h-9v-2l3-3z"/><use href="#doc"/></symbol>
<symbol id="d-lwall" viewBox="0 0 16 16"><path fill="#9ab4c8" stroke="#24445a" d="M8.500.500h5v12h-12v-4h7z"/><use href="#doc"/></symbol>
<symbol id="d-push" viewBox="0 0 16 16"><path fill="#ccc" stroke="#888" d="M5.500 1.500h8v10h-8zM5 4.500h8M9 1v10"/><path stroke="#f01010" stroke-width="1.600" d="M0 2h5M0 6h5M0 11h5M3 0l2 2-2 2M3 9l2 2-2 2"/><use href="#doc"/></symbol>
<symbol id="d-push1" viewBox="0 0 16 16"><path fill="#ddd" stroke="#888" d="M5.500 1.500h8v10h-8zM5 4.500h8M9 1v10"/><path stroke="#f01010" stroke-width="1.600" d="M0 6h5M3 4l2 2-2 2"/><use href="#doc"/></symbol>
<symbol id="d-bld" viewBox="0 0 16 16"><path fill="#999" stroke="#333" d="M3.500.5h9v10h-9zM.5 10.500h14v4H.5zM6.500 1v9M9.500 1v9"/><use href="#doc"/></symbol>
<symbol id="d-graph" viewBox="0 0 16 16"><path stroke="#111" stroke-width="1.300" d="M1.500 0v13.500H8M0 2l1.500-2L3 2"/><path stroke="#24586a" d="M2 12l6-6h7"/><path fill="#c02020" stroke="none" d="M12 4h3v3h-3z"/><use href="#doc"/></symbol>
<symbol id="d-node" viewBox="0 0 16 16"><path stroke="#111" stroke-width="2" d="M0 6h16M7.500 1v9"/><use href="#doc" stroke="#f01010"/></symbol>
<symbol id="d-arrows" viewBox="0 0 16 16"><path stroke="#555" d="M0 1.500h10M8 0l2 1.500L8 3M0 5.500h10M0 9.500h6M0 13.500h6M8 4l2 1.500L8 7"/><use href="#doc"/></symbol>
<symbol id="d-city" viewBox="0 0 16 16"><path fill="#9ab" stroke="#567" d="M3.500 14.500v-11l4-3 2 3v3l3-2v10z"/><use href="#doc"/></symbol>
<symbol id="d-road" viewBox="0 0 16 16"><path fill="#9aa4ac" stroke="#345" d="M.5 2.500h15l-4 3H.5zM.5 7.500h10M.5 11.500h8v-4"/><use href="#doc"/></symbol>
<symbol id="d-frame" viewBox="0 0 16 16"><path fill="#b8d0e4" stroke="#24587a" stroke-width="1.400" d="M1 1.500h14v13H1zM4 4h8v8H4z"/><path stroke="#c02020" d="M4 4l8 8M12 4l-8 8"/><use href="#doc"/></symbol>
</svg>

<header class="title">
  <button class="app" type="button" aria-label="ideCAD menüsü">ide<b>CAD</b></button>
  <div class="quick">
    <button aria-label="Başlangıç"><svg><use href="#home"/></svg></button><button aria-label="Yeni"><svg><use href="#new"/></svg></button><button aria-label="Aç"><svg><use href="#open"/></svg></button><button aria-label="Kaydet"><svg><use href="#save"/></svg></button><button aria-label="Tümünü kaydet"><svg><use href="#saveall"/></svg></button><button aria-label="Geri al"><svg><use href="#undo"/></svg></button><button aria-label="Yinele"><svg><use href="#redo"/></svg></button><button aria-label="Son işlem"><svg><use href="#undobox"/></svg></button><i class="sep"></i>
    <button class="on" aria-label="Çizgi kalınlığı"><svg><use href="#lines"/></svg></button><button aria-label="Yazı"><svg><use href="#abox"/></svg></button><button aria-label="Dik"><svg><use href="#perp"/></svg></button><button aria-label="Paralel"><svg><use href="#para"/></svg></button><button aria-label="Ortogonal"><svg><use href="#ortho"/></svg></button><i class="sep"></i>
    <button aria-label="Gride yakala"><svg><use href="#gridlock"/></svg></button><button class="on" aria-label="Düğüme yakala"><svg><use href="#nodelock"/></svg></button><button class="on" aria-label="Kesişime yakala"><svg><use href="#crosslock"/></svg></button><button aria-label="En yakın"><svg><use href="#near"/></svg></button><button aria-label="Orta nokta"><svg><use href="#mid"/></svg></button><i class="sep"></i>
    <button class="on" aria-label="Alt üst"><svg><use href="#updown"/></svg></button><button aria-label="A/S"><svg><use href="#as"/></svg></button><button aria-label="Hızlı"><svg><use href="#bolt"/></svg></button><i class="dd"></i><button aria-label="Ölçü"><svg><use href="#dim"/></svg></button><i class="dd"></i><button aria-label="Kot"><svg><use href="#level"/></svg></button><i class="dd"></i><button aria-label="Açı"><svg><use href="#angred"/></svg></button><button aria-label="Uzaklık"><svg><use href="#ruler"/></svg></button><button aria-label="Alan"><svg><use href="#m2"/></svg></button><button aria-label="Açı ölç"><svg><use href="#angq"/></svg></button><button aria-label="Liste"><svg><use href="#listeq"/></svg></button><button aria-label="Model"><svg><use href="#slab"/></svg></button><button aria-label="Yazı altı"><svg><use href="#abcu"/></svg></button><button aria-label="Otomatik yazı"><svg><use href="#autoabc"/></svg></button><button aria-label="Rapor"><svg><use href="#docred"/></svg></button><button aria-label="Ölçü raporu"><svg><use href="#rulerdoc"/></svg></button><button class="on" aria-label="Donatı"><svg><use href="#mesh"/></svg></button>
  </div>
  <button class="more" aria-label="Özelleştir"><i class="dd"></i></button>
  <h1>ideCAD Statik - 1-VOLKAN YEŞİL - A BLOK.ide11 - VOLKAN YEŞİL VE MÜŞT.</h1>
  <h1 class="second">1236 ADA 5 PARSEL 8/A&nbsp; KAPI - [TÜM PROJE]</h1>
  <div class="wins">
    <button aria-label="Küçült"><svg><path d="M3 8.500h10"/></svg></button>
    <button aria-label="Geri yükle"><svg><path d="M3.500 5.500h7v7h-7zM5.500 5V3.500h7v7H11"/></svg></button>
    <button aria-label="Kapat"><svg><path d="M3 3l10 10M13 3L3 13"/></svg></button>
  </div>
</header>

<nav class="tabs">
  <a href="#analiz">Analiz ve Tasarım</a><a href="#raporlar">Raporlar</a><a class="active" href="#cizimler">Çizimler</a>
  <label class="search"><svg><circle cx="6" cy="6" r="4"/><path d="M9 9l4 4"/></svg><input type="text" aria-label="Komut ara" placeholder="Herhangi bir komut ara..."><i class="dd"></i></label>
  <i class="sep"></i>
  <button aria-label="Katmanlar"><svg><use href="#layers"/></svg></button><button aria-label="Katman ayarı"><svg><use href="#layers"/></svg></button>
  <div class="layer"><svg><use href="#lockx"/></svg><svg><use href="#unlock"/></svg><select aria-label="Katman"><option>Standart</option></select><i class="dd"></i></div>
  <button class="view">Görünüm <i class="dd"></i></button>
  <button aria-label="Araçlar"><svg><use href="#toolset"/></svg></button><i class="sep"></i><button aria-label="Yardım"><svg><use href="#help"/></svg></button><i class="dd"></i>
  <button class="mdi" aria-label="Pencereyi küçült"><svg><path d="M5 12h7"/></svg></button><button class="mdi" aria-label="Pencereyi geri yükle"><svg><path d="M4 6.500h7v5H4zM6 4.500h7v5"/></svg></button><button class="mdi" aria-label="Pencereyi kapat"><svg><path d="M5 4l6 8M11 4l-6 8"/></svg></button>
</nav>

<section class="ribbon">
  <div class="panel g149"><div class="body">
    <button class="big m"><svg viewBox="0 0 32 32"><path fill="#f4f4f4" stroke="#888" d="M.5 3.500h31v25H.5z"/><path fill="#fff" stroke="#8094a2" d="M3.500 14.500h6v8h-6zM5 11l8-2v10l-3 3M4 14l2-4h8M3 18h9M14.500 24.500v-5l3-2 3 2v5zM23.500 24.500v-5h6v5zM23.500 14.500v-5l2-2 3 2v5z"/><path stroke="#888" stroke-dasharray="2 2" d="M5 25L28 6"/><path stroke="#e04040" stroke-width="2" d="M28 5h2"/></svg><span>Pencere<br>Değiştir</span></button><i class="sep"></i>
    <button class="big s"><svg viewBox="0 0 32 32"><path fill="#f4f4f4" stroke="#888" d="M.5 3.500h31v25H.5zM18.500 6v20M19 16h11"/><path fill="#dde8ee" stroke="#8094a2" d="M4.500 14.500h8v8h-8zM4 14l4-4h7v9l-3 3M4 18h10M8 10v10M20.500 18.500h8v3h-8zM20.500 21.500h8v3h-8zM19 11h10M22 8v6M26 8v6"/><path stroke="#e04040" stroke-width="2" d="M28 5h2"/></svg><span>Kat<br>listesi <i class="dd"></i></span></button>
    <button class="big s"><svg viewBox="0 0 32 32"><path fill="#f4f4f4" stroke="#888" d="M.5 3.500h31v25H.5z"/><path stroke="#8094a2" fill="#fff" d="M4 9.500h6l3 4h6l3-4h6v-1H4zM4.500 9v5M27.500 9v5M7.500 24.500v-5l3-2 3 2v5zM18.500 24.500v-6h6v6z"/><path stroke="#e04040" stroke-width="2" d="M28 5h2"/></svg><span>Çizim<br>Listesi <i class="dd"></i></span></button>
  </div><h2>Pencere</h2></div>
  <div class="panel g185"><div class="body">
    <button class="big l"><svg viewBox="0 0 32 32"><path fill="#b8b8b8" stroke="#222" stroke-width="1.500" d="M1 1h30v30H1z"/><path fill="#d8d8d8" stroke="#222" stroke-width="1.500" d="M5 5h22v22H5z"/><path stroke="#222" stroke-width="2" stroke-dasharray="2 7" d="M7 8h18M7 25h18M7 8v18M25 8v18"/><path stroke="#222" d="M22 6l3 5M19 7l3 5"/><use href="#pencil"/></svg><span>Betonarme<br><i class="dd"></i></span></button>
    <button class="big m"><svg viewBox="0 0 32 32"><path stroke="#222" stroke-width="1.400" d="M3 3v28M29 3v28M1 31h5M26 31h5M1 3h4M27 3h4M3 8c8-6 18-6 26 0M3 14c8-6 18-6 26 0M3 20c8-7 18-7 26 0M4 28L16 13l12 15"/><use href="#pencil"/></svg><span>İskele<br>Çizimleri</span></button>
    <button class="big l"><svg viewBox="0 0 32 32"><path stroke="#222" stroke-width="1.400" d="M3 1v4h4V1M5 5v12M3 17h4v14H3zM13 1v4h4V1M15 5v8M25 1v4h4V1M27 5v12M25 17h4v14h-4zM10 31l5-16 7 16M15 15v16M8 31h18"/><use href="#pencil"/></svg><span>Kalıp İskelesi<br>Çizimleri</span></button>
  </div><h2>Çizim Oluştur</h2></div>
  <div class="panel g207"><div class="body">
    <button class="big s"><svg viewBox="0 0 32 32"><path stroke="#2c5068" stroke-width="1.200" d="M4 16L14 5l6 21 10-8M1 16h6M4 13v6M11 5h6M14 2v6M17 26h6M20 23v6M27 18h5M30 15v6"/></svg><span>Sürekli<br>Çizgi <i class="dd"></i></span></button>
    <div class="col"><button aria-label="Kot çizgisi"><svg><use href="#p21"/></svg></button><button aria-label="Daire"><svg><use href="#circler"/></svg></button><button aria-label="Yay"><svg><use href="#arc"/></svg></button></div>
    <div class="col"><button aria-label="Bulut"><svg><use href="#cloud"/></svg></button><button aria-label="Kama"><svg><use href="#wedge"/></svg></button><button aria-label="Elips"><svg><use href="#ellipse"/></svg></button></div>
    <div class="drops"><i></i><i></i><i class="dd"></i></div>
    <div class="col"><button aria-label="Eğri"><svg><use href="#wave"/></svg></button><button aria-label="Kırık çizgi"><svg><use href="#brk"/></svg></button><button aria-label="Resim"><svg><use href="#picture"/></svg></button></div>
    <div class="drops"><i class="dd"></i><i></i><i></i></div>
    <button class="big l"><svg viewBox="0 0 32 32"><path fill="#3c6e8c" stroke="#24485e" d="M4 6l6-5h18v23l-6 7z"/><path fill="#7ea8c4" stroke="#24485e" d="M4.500 6.500h18v24h-18z"/><path fill="#24485e" stroke="none" d="M8 10h11v6H8z"/></svg><span>Kütüphane<br><i class="dd"></i></span></button>
  </div><h2>İlkel Objeler</h2></div>
  <div class="panel g315"><div class="body">
    <div class="col"><button aria-label="Pergel"><svg><use href="#compass"/></svg></button><button aria-label="Koni"><svg><use href="#cone"/></svg></button><button aria-label="Liste taşı"><svg><use href="#movelist"/></svg></button></div><i class="sep"></i>
    <div class="col"><button aria-label="Ayarla"><svg><use href="#pick"/></svg></button><button aria-label="Damlalık"><svg><use href="#dropper"/></svg></button><button aria-label="Not"><svg><use href="#note"/></svg></button></div><i class="sep"></i>
    <button class="big s"><svg viewBox="0 0 32 32"><path stroke="#222" stroke-width="1.300" d="M16 3v26M3 16h26"/><path fill="#222" stroke="none" d="M16 1l3 5h-6zM16 31l3-5h-6zM1 16l5-3v6zM31 16l-5-3v6z"/></svg><span>Taşı</span></button>
    <div class="col"><button aria-label="Döndür"><svg><use href="#rotate"/></svg></button><button aria-label="Aynala"><svg><use href="#mirror"/></svg></button><button aria-label="İndir"><svg><use href="#drop"/></svg></button></div><i class="sep"></i>
    <div class="col"><button aria-label="Sırala"><svg><use href="#bars"/></svg></button><button aria-label="Profil"><svg><use href="#ibeam"/></svg></button><button aria-label="Ölçekle"><svg><use href="#array"/></svg></button></div>
    <div class="drops"><i class="dd"></i><i></i><i></i></div>
    <div class="col"><button aria-label="Buda"><svg><use href="#trim"/></svg></button><button aria-label="Pah"><svg><use href="#chamfer"/></svg></button><button aria-label="Bölge"><svg><use href="#region"/></svg></button></div>
    <div class="col"><button aria-label="Uzat"><svg><use href="#extend"/></svg></button><button aria-label="Yuvarla"><svg><use href="#fillet"/></svg></button><button aria-label="Patlat"><svg><use href="#wand"/></svg></button></div><i class="sep"></i>
    <button class="big s"><svg viewBox="0 0 32 32"><path stroke="#555" stroke-width="1.300" d="M9 12C8 1 24 1 23 12c11 0 11 15 0 15H9c-11 0-11-15 0-15z"/><path stroke="#a02020" stroke-width="1.300" d="M12 15c-1-11 9-11 8 0 8-1 8 8 2 8H10c-6 0-6-9 2-8z"/></svg><span>Ofset</span></button>
    <div class="col"><button aria-label="Böl"><svg><use href="#burst"/></svg></button><button aria-label="Kır"><svg><use href="#burst2"/></svg></button><button aria-label="Birleştir"><svg><use href="#joinx"/></svg></button></div>
  </div><h2>Değiştir</h2></div>
  <div class="panel g170"><div class="body">
    <button class="big s"><svg viewBox="0 0 32 32"><path fill="#a4bad6" stroke="#8098b8" d="M2.500 6.500h13v18h-13z"/><path stroke="#666" stroke-dasharray="2 1" d="M15.500 14.500h13v17h-13z"/><path stroke="#1c4450" stroke-width="1.500" d="M20 2c5 0 7 3 7 7M23 6l4 4 4-4"/></svg><span>Klonla</span></button>
    <div class="col"><button aria-label="Kopyala"><svg><use href="#copy"/></svg></button><button aria-label="Yapıştır"><svg><use href="#paste"/></svg></button><button aria-label="Kata kopyala"><svg><use href="#floors"/></svg></button></div><i class="sep"></i>
    <div class="col"><button aria-label="Çoklu kopya"><svg><use href="#clones"/></svg></button><button aria-label="Yay kopya"><svg><use href="#clonec"/></svg></button><button aria-label="Dairesel kopya"><svg><use href="#ring"/></svg></button></div><i class="sep"></i>
    <div class="col"><button aria-label="Seç"><svg><use href="#sel"/></svg></button><button aria-label="Seçimi bırak"><svg><use href="#selg"/></svg></button><button aria-label="Kattan seç"><svg><use href="#selup"/></svg></button></div>
    <div class="col"><button aria-label="Seçime ekle"><svg><use href="#seladd"/></svg></button><button aria-label="Izgara seç"><svg><use href="#selgrid"/></svg></button><button aria-label="Sil"><svg><use href="#eraser"/></svg></button></div>
  </div><h2>Değiştir</h2></div>
  <div class="panel g136"><div class="body">
    <div class="col"><button aria-label="Eksen"><svg><use href="#axes"/></svg></button><button aria-label="Eksen tarama"><svg><use href="#axhatch"/></svg></button><button aria-label="Yazı yakala"><svg><use href="#abox"/></svg></button></div><i class="sep"></i>
    <div class="col"><button aria-label="Grid"><svg><use href="#gridlock"/></svg></button><button class="on" aria-label="Kesişim"><svg><use href="#crosslock"/></svg></button><button class="on" aria-label="Düğüm"><svg><use href="#nodelock"/></svg></button></div><i class="sep"></i>
    <div class="col"><button aria-label="Dik"><svg><use href="#perp"/></svg></button><button aria-label="Paralel"><svg><use href="#para"/></svg></button><button aria-label="Ortogonal"><svg><use href="#ortho"/></svg></button></div><i class="sep"></i>
    <div class="col"><button aria-label="Teğet"><svg><use href="#tangent"/></svg></button><button aria-label="En yakın"><svg><use href="#near"/></svg></button><button aria-label="Orta"><svg><use href="#mid"/></svg></button></div>
  </div><h2>Yakalama</h2></div>
  <div class="panel g74"><div class="body">
    <button class="big s"><svg viewBox="0 0 32 32"><path stroke="#222" stroke-width="2.500" d="M4 11c0-6 9-5 9 0 0 4-4 4-4 8M9 23v3"/><path stroke="#222" d="M20 1c-4 3-1 10-5 15 4 4 1 12 5 15"/><path fill="#222" stroke="none" d="M25 1h5v30h-5z"/><path stroke="#f6e800" stroke-width="3" stroke-dasharray="3 1" d="M27.500 3v27"/></svg><span>Uzaklık</span></button>
    <div class="col"><button aria-label="Alan"><svg><use href="#m2"/></svg></button><button aria-label="Açı"><svg><use href="#angq"/></svg></button><button aria-label="Kesit alanı"><svg><use href="#mm2"/></svg></button></div>
  </div><h2>Referans</h2></div>
  <div class="panel g187"><div class="body">
    <button class="big s"><svg viewBox="0 0 32 32"><path stroke="#34607c" stroke-width="1.300" d="M1 8.500h30M5 5v12M16 5v8M27 5v12M5 20v6M2 23h6M16 16v6M13 19h6M27 20v6M24 23h6"/><path fill="#24507a" stroke="none" d="M8 2h4v4H8zM20 2h4v4h-4z"/></svg><span>Serbest<br>Ölçü <i class="dd"></i></span></button>
    <div class="col"><button aria-label="Dış ölçü"><svg><use href="#dimbox"/></svg></button><button aria-label="İç ölçü"><svg><use href="#dimboxh"/></svg></button><button aria-label="Eğik ölçü"><svg><use href="#dimsk"/></svg></button></div>
    <button class="big s dim"><svg viewBox="0 0 32 32"><path stroke="#8ca4b8" stroke-width="1.200" d="M9 6v24M0 22.500h32M18 7l2-2v9M22 13.500h1M26 7c0-3 5-3 4 0-1 3-4 4-4 7h5"/><circle cx="9" cy="22" r="8" stroke="#8ca4b8" stroke-width="1.200"/><path fill="#a4b8c8" stroke="none" d="M9 14a8 8 0 0 0-8 8h8zM9 22v8a8 8 0 0 0 8-8z"/></svg><span>Kot<br><i class="dd"></i></span></button>
    <button class="big s"><svg viewBox="0 0 32 32"><path stroke="#34505e" stroke-width="1.300" d="M1 16h20L11 27zM18 16l5-3h9"/><path stroke="#24507a" stroke-width="1.500" d="M17 3l2-2v9M22 9.500h1M25 3c0-3 5-3 4 0-1 3-4 3-4 6.500h5"/></svg><span>Kesit<br>Kot <i class="dd"></i></span></button>
    <div class="col"><button aria-label="Açı ölçüsü"><svg><use href="#angred"/></svg></button><button aria-label="Yarıçap"><svg><use href="#radius"/></svg></button><button aria-label="Açıklama"><svg><use href="#leader"/></svg></button></div>
  </div><h2>Boyutlar</h2></div>
  <div class="panel g91"><div class="body">
    <button class="big s"><svg viewBox="0 0 32 32"><path stroke="#222" stroke-width="1.500" d="M12 5c0-4 6-5 6 0v26h-6"/></svg><span>Çiroz</span></button>
    <button class="big s"><svg viewBox="0 0 32 32"><path stroke="#222" stroke-width="1.500" d="M24 8l2-5L4 9l-1 2v19h26V9c0-3-3-3-4 0"/></svg><span>Etriye</span></button>
  </div><h2>Donatı</h2></div>
  <div class="panel g83"><div class="body">
    <button class="big m"><svg viewBox="0 0 32 32"><path stroke="#24587a" stroke-width="4" d="M16 7l9 9-9 9-9-9z"/><path stroke="#6ca4c8" stroke-width="2" d="M16 7l9 9-9 9-9-9z"/><path fill="#4c88ac" stroke="#24587a" d="M11 .5h10L16 7zM11 31.500h10L16 25zM.5 11v10L7 16zM31.500 11v10L25 16z"/></svg><span>Tanımlı<br>Tarama <i class="dd"></i></span></button>
    <div class="col"><button aria-label="Izgara tarama"><svg><use href="#grid"/></svg></button><button aria-label="Dolgu"><svg><use href="#fill"/></svg></button><button aria-label="Çerçeve dolgu"><svg><use href="#fillo"/></svg></button></div>
  </div><h2>Tarama</h2></div>
  <div class="panel g76"><div class="body">
    <button class="big s"><svg viewBox="0 0 32 32"><path stroke="#2c4a60" stroke-width="1.500" d="M3 29.500h8M19 29.500h11M7 29L15 5M11 20h10"/><path fill="#2c4a60" stroke="none" d="M15 3h2l10 26h-5L14 8z"/></svg><span>Yazılar<br><i class="dd"></i></span></button>
    <div class="col"><button aria-label="Sütun yazı"><svg><use href="#ii"/></svg></button><button aria-label="Yazı dosyası"><svg><use href="#abcfile"/></svg></button><button aria-label="Yazı bul"><svg><use href="#ae"/></svg></button></div>
  </div><h2>Yazılar</h2></div>
  <div class="panel g73"><div class="body">
    <button class="big l"><svg viewBox="0 0 32 32"><path fill="#fff" stroke="#34607c" d="M11 .5h20.500v31H.5V11z"/><path stroke="#6c8ca4" d="M10 4.500h17v23H4.500V12"/><path fill="#2c3c48" stroke="none" d="M11 0v12H0z"/></svg><span>Yeni Pafta<br>Oluştur <i class="dd"></i></span></button>
  </div><h2>Pafta Dizaynı</h2></div>
  <div class="panel g107"><div class="body">
    <button class="big xl dim"><svg viewBox="0 0 32 32"><path stroke="#9ab0c4" stroke-width="1.200" d="M3 14l4-5 4 5zM0 16.500h15M15 21.500h17M22 19l4-5 4 5z"/></svg><span>Kalıp / Temel<br>Planı Kesiti <i class="dd"></i></span></button><i class="sep"></i>
    <div class="col"><button aria-label="Izgara ayarı"><svg><use href="#gridc"/></svg></button><button aria-label="As"><svg><use href="#asr"/></svg></button><button aria-label="Numaralandır"><svg><use href="#n123"/></svg></button></div>
  </div><h2>Araçlar</h2></div>
</section>

<div class="hbars">
  <div class="hbar"><i class="grip"></i>
    <button aria-label="Pencere büyüt"><svg><use href="#zoomwin"/></svg></button><button aria-label="Tümünü göster"><svg><use href="#zoomext"/></svg></button><i class="sep"></i><button aria-label="Ayarla"><svg><use href="#pick"/></svg></button><button aria-label="Damlalık"><svg><use href="#dropper"/></svg></button><button aria-label="Not"><svg><use href="#note"/></svg></button><i class="sep"></i><button aria-label="Pergel"><svg><use href="#compass"/></svg></button><button aria-label="Koni"><svg><use href="#cone"/></svg></button><i class="sep"></i><button aria-label="Taşı"><svg><use href="#move"/></svg></button><button aria-label="Liste taşı"><svg><use href="#movelist"/></svg></button><button aria-label="Döndür"><svg><use href="#rotate"/></svg></button><button aria-label="İndir"><svg><use href="#drop"/></svg></button><button aria-label="Aynala"><svg><use href="#mirror"/></svg></button><button aria-label="Profil"><svg><use href="#ibeam"/></svg></button><button aria-label="Ölçekle"><svg><use href="#array"/></svg></button><i class="sep"></i><button aria-label="Buda"><svg><use href="#trim"/></svg></button><button aria-label="Uzat"><svg><use href="#extend"/></svg></button><button aria-label="Ofset"><svg><use href="#offset"/></svg></button><button aria-label="Sırala"><svg><use href="#bars"/></svg></button><button aria-label="Böl"><svg><use href="#burst"/></svg></button><button aria-label="Kır"><svg><use href="#burst2"/></svg></button><button aria-label="Birleştir"><svg><use href="#joinx"/></svg></button><button aria-label="Yuvarla"><svg><use href="#fillet"/></svg></button><button aria-label="Pah"><svg><use href="#chamfer"/></svg></button><button aria-label="Bölge"><svg><use href="#region"/></svg></button><button aria-label="Patlat"><svg><use href="#wand"/></svg></button><i class="sep"></i><button aria-label="Ölçü"><svg><use href="#dim"/></svg></button><button aria-label="Kütüphane"><svg><use href="#book"/></svg></button><button aria-label="Tarama"><svg><use href="#grid"/></svg></button><i class="sep"></i><button aria-label="Resim"><svg><use href="#picture"/></svg></button><button aria-label="Yazı"><svg><use href="#ltra"/></svg></button><button aria-label="Çizgi"><svg><use href="#poly"/></svg></button><button aria-label="Yay"><svg><use href="#arc"/></svg></button><button aria-label="Daire"><svg><use href="#circle"/></svg></button><button aria-label="Bulut"><svg><use href="#cloud"/></svg></button><button aria-label="Kama"><svg><use href="#wedge"/></svg></button><button aria-label="Kırık"><svg><use href="#zig"/></svg></button><button aria-label="Kot çizgisi"><svg><use href="#p21"/></svg></button><button aria-label="Uzaklık"><svg><use href="#ruler"/></svg></button><button aria-label="Alan"><svg><use href="#m2"/></svg></button><button aria-label="Açı"><svg><use href="#angq"/></svg></button><button aria-label="Kesit alanı"><svg><use href="#mm2"/></svg></button><i class="sep"></i><button aria-label="Kesit"><svg><use href="#section"/></svg></button><button aria-label="Kesit göster"><svg><use href="#eye"/></svg></button><i class="sep"></i><button aria-label="Pafta"><svg><use href="#sheet"/></svg></button><button aria-label="Paftalar"><svg><use href="#sheets"/></svg></button><i class="sep"></i><button aria-label="Eksen"><svg><use href="#axes"/></svg></button><button aria-label="Eksen tarama"><svg><use href="#axhatch"/></svg></button><i class="sep"></i><button aria-label="XY"><svg><use href="#axtxt"/></svg></button><button aria-label="Z"><svg><use href="#axz"/></svg></button><button aria-label="3P"><svg><use href="#axtxt"/></svg></button><button aria-label="Küresel"><svg><use href="#axglobe"/></svg></button><i class="cap"></i>
  </div>
  <div class="hbar"><i class="grip"></i>
    <button aria-label="Silindir"><svg><use href="#gcyl"/></svg></button><button aria-label="Merdiven"><svg><use href="#gstair"/></svg></button><button aria-label="Kubbe"><svg><use href="#gdome"/></svg></button><button aria-label="İstinat"><svg><use href="#gwall"/></svg></button><button aria-label="Duvar"><svg><use href="#gell"/></svg></button><button aria-label="Etiket"><svg><use href="#gtag"/></svg></button><button aria-label="Grafik"><svg><use href="#axgraph"/></svg></button><button aria-label="Grafik P"><svg><use href="#axp"/></svg></button><button aria-label="Grafik sor"><svg><use href="#axq"/></svg></button><button aria-label="Spektrum"><svg><use href="#chart"/></svg></button><button aria-label="Hızlı analiz"><svg><use href="#bolt"/></svg></button><i class="sep"></i><button aria-label="Tablo iptal"><svg><use href="#calx"/></svg></button><button aria-label="Tablo"><svg><use href="#tbl"/></svg></button><i class="cap"></i>
  </div>
</div>

<main class="work">
  <div class="vcol">
    <div class="vbar"><i class="grip"></i>
      <button aria-label="Özellikler"><svg><use href="#props"/></svg></button><i class="sep"></i><button aria-label="Seç"><svg><use href="#sel"/></svg></button><button aria-label="Seçimi bırak"><svg><use href="#selg"/></svg></button><button aria-label="Kattan seç"><svg><use href="#selup"/></svg></button><button aria-label="Seçime ekle"><svg><use href="#seladd"/></svg></button><button aria-label="Izgara seç"><svg><use href="#selgrid"/></svg></button><i class="sep"></i><button aria-label="Uzaklık"><svg><use href="#ruler"/></svg></button><i class="sep"></i><button aria-label="Bilgi"><svg><use href="#textdoc"/></svg></button><i class="sep"></i><button aria-label="Kata kopyala"><svg><use href="#floors"/></svg></button><button aria-label="Kopyala"><svg><use href="#copy"/></svg></button><button aria-label="Yapıştır"><svg><use href="#pastec"/></svg></button><button aria-label="Klonla"><svg><use href="#clone"/></svg></button><button aria-label="Çoklu kopya"><svg><use href="#clones"/></svg></button><button aria-label="Yay kopya"><svg><use href="#clonec"/></svg></button><button aria-label="Dairesel kopya"><svg><use href="#ring"/></svg></button><i class="sep"></i><button aria-label="Kiriş"><svg><use href="#gbeam"/></svg></button><button aria-label="Kolonlar"><svg><use href="#gcols"/></svg></button><button aria-label="Model"><svg><use href="#slab"/></svg></button><button aria-label="Hat"><svg><use href="#gline"/></svg></button><button aria-label="Köşe"><svg><use href="#ggamma"/></svg></button><i class="sep"></i><button aria-label="Bloklar"><svg><use href="#gblocks"/></svg></button><i class="sep"></i><button aria-label="Otomatik yazı"><svg><use href="#autoabc"/></svg></button><button aria-label="Çerçeve"><svg><use href="#gframe"/></svg></button><button aria-label="Hesap"><svg><use href="#calc"/></svg></button><button aria-label="Hedef"><svg><use href="#target"/></svg></button><button aria-label="İğne"><svg><use href="#gpin"/></svg></button><i class="sep"></i><button aria-label="Bul"><svg><use href="#binoc"/></svg></button><i class="cap"></i>
    </div>
  </div>

  <div class="center">
    <div class="canvas">
      <svg class="drawing" role="img" aria-label="Çizim alanı"><g transform="translate(-28 -165)">
        <g class="px">
          <path class="bl" d="M116.500 785v186M806.500 785v186M856.500 785v186M1689.500 785v186M1738.500 785v186M30 970.500h8M48 970.500h19M77 970.500h19M107 970.500h708M822 970.500h16M848 970.500h849M1705 970.500h17M1730 970.500h110"/>
          <path class="cy" stroke-dasharray="16 8" stroke-dashoffset="8" d="M806.500 723v248M1738.500 723v248"/>
          <path class="cy" d="M806.500 979v3M1738.500 979v3"/>
          <path class="mg" d="M34.500 735v247M53.500 735v247M72.500 735v247M91.500 735v247M111.500 735v247M811.500 735v247M825.500 735v247M837.500 735v247M850.500 735v247M1694.500 735v247M1707.500 735v247M1720.500 735v247M1733.500 735v247M31 977.500h1809"/>
          <path class="mg" stroke-width="4" stroke-dasharray="1 23.900" d="M125 980h1715"/>
          <path class="rd" d="M28 784.500h41v-5l8 11v-6h49M796 784.500h32v-5l7 11v-6h31M1679 784.500h31v-5l7 11v-6h31"/>
          <circle class="rd" cx="806" cy="713" r="8.500"/><circle class="rd" cx="1738" cy="713" r="8.500"/>
          <circle class="sg" cx="668" cy="546" r="15"/><circle class="sg" cx="1207" cy="532" r="16"/>
          <path class="mg" d="M669.500 544v-5l-72 7v30.500h74V547.500l-3 1M664 548l5-5M665 553l5-5M1204 526l-26.500 8v54.500h30V535.500M1204 526l-6 5M1207 535l-7 6M1204 528v3"/>
        </g>
        <svg class="detail" x="270" y="280" viewBox="0 0 930 1020">
          <g class="px3">
            <path class="ye" d="M43.500 49.500h840v942h-840zM82.500 106.500h276v156h-276zM579 322.500h270M579 364.500h82.500v171h102v-171H849"/>
            <circle class="ye" cx="240" cy="438" r="101"/><circle class="ye" cx="474" cy="438" r="101"/><circle class="ye" cx="550" cy="652" r="27" stroke-dasharray="28 14"/>
            <path class="cy" stroke-width="6" d="M90 117h262v135H90zM178 117v135M264 117v135M90 180h262M411 120h262v135H411zM736 123v132h32M796 123h33v132M671 330h82v198h-82zM543 645v117h32"/>
            <path class="cy" d="M94 122l22 16M104 122l12 9M240 131l18-14M246 126l10-3M94 182l12 20M340 202l12-20M190 252l12-16M415 124l22 14M417 132l10 12M740 118l20 18M806 240l22 18M676 336l20 18M676 342l10 14M545 645l22 12M240 352v22l-6 4M176 375l6 14 12 6M480 352v20l-6 4M544 434h-26v4M520 486l-14-16M407 396l14-14"/>
            <circle class="cy" stroke-width="5" cx="240" cy="438" r="87"/><circle class="cy" stroke-width="5" cx="474" cy="438" r="87"/><circle class="cy" stroke-width="5" cx="474" cy="438" r="66"/>
            <g class="dot"><circle cx="98" cy="124" r="6"/><circle cx="184" cy="124" r="6"/><circle cx="258" cy="124" r="6"/><circle cx="344" cy="124" r="6"/><circle cx="98" cy="245" r="6"/><circle cx="184" cy="245" r="6"/><circle cx="256" cy="245" r="6"/><circle cx="344" cy="245" r="6"/><circle cx="98" cy="186" r="5"/><circle cx="344" cy="186" r="5"/><circle cx="678" cy="336" r="6"/><circle cx="711" cy="336" r="6"/><circle cx="747" cy="336" r="6"/><circle cx="678" cy="520" r="6"/><circle cx="711" cy="520" r="6"/><circle cx="747" cy="520" r="6"/>
            <circle cx="240" cy="357" r="7"/><circle cx="298" cy="380" r="7"/><circle cx="321" cy="438" r="7"/><circle cx="298" cy="498" r="7"/><circle cx="240" cy="521" r="7"/><circle cx="180" cy="498" r="7"/><circle cx="156" cy="438" r="7"/><circle cx="182" cy="382" r="7"/>
            <circle cx="474" cy="357" r="6"/><circle cx="507" cy="362" r="6"/><circle cx="534" cy="380" r="6"/><circle cx="551" cy="407" r="6"/><circle cx="557" cy="438" r="6"/><circle cx="551" cy="471" r="6"/><circle cx="534" cy="498" r="6"/><circle cx="507" cy="515" r="6"/><circle cx="474" cy="521" r="6"/><circle cx="441" cy="515" r="6"/><circle cx="414" cy="498" r="6"/><circle cx="397" cy="471" r="6"/><circle cx="391" cy="438" r="6"/><circle cx="397" cy="407" r="6"/><circle cx="414" cy="382" r="6"/><circle cx="441" cy="362" r="6"/><circle cx="474" cy="376" r="6"/><circle cx="519" cy="393" r="6"/><circle cx="536" cy="438" r="6"/><circle cx="519" cy="484" r="6"/><circle cx="474" cy="500" r="6"/><circle cx="429" cy="484" r="6"/><circle cx="413" cy="438" r="6"/><circle cx="429" cy="393" r="6"/></g>
            <path class="cy" d="M304.500 604.500h-195v27h195M304.500 604.500c86 0 124 106 67 166l-86 75-17-19 84-78M304.500 565.500c115 0 166 138 98 220l-86 84"/>
            <circle class="cy" cx="303" cy="696" r="67"/>
            <path class="rd" d="M238 697.500h130M304.500 690v14M304 588c95 0 142 120 77 185l-80 83M145 368l16 9M248 321l2 18M152 372c24-30 54-46 96-46M366 768l34 26M284 845l36 28"/>
            <path class="rdf" d="M238 697l14-5v10zM368 697l-14-5v10zM304 588l13-4v9zM152 372l3-13 7 7zM248 326l-13-4v9zM381 773l-5 13-8-8zM301 856l5-13 8 8z"/>
            <path class="mg" d="M304.500 559v30"/><path class="mg" stroke-dasharray="20 8 4 8" d="M409 621l46-25h90M331 858l36 36h87"/>
          </g>
        </svg>
        <text class="green" x="286" y="305">ETRİYE VE ÇİROZ KIVRIM DETAYI</text>
        <text class="small" x="306" y="389">150 mm</text>
        <text class="serif" x="332" y="521">Çap &gt;= 5Ø</text><text class="serif tiny" x="380" y="521">dir</text>
        <text class="serif" x="409" y="505">135°</text><text class="serif" x="385" y="556">&gt;= 6Ø</text><text class="serif" x="385" y="566">&gt;= 80 mm</text>
        <text class="fat" x="455" y="481">L1</text><text class="fat" x="432" y="580">L2</text>
        <text class="noto" x="301" y="595">** Donatı düzenlemeleri TBDY 2018'de verilen</text>
        <text class="noto" x="315" y="605">koşullar dikkate alınarak yapılmıştır.</text>
        <text class="heavy caps" x="623" y="313">KANCA KIVRIMLARINDAKİ ÖLÇÜYE KIVRIM DAHİLDİR.</text>
        <text class="heavy caps" x="623" y="337">KANCA DÜZ BOYU EN EZ SEKİZ SANTİMETREDİR.</text>
        <text class="heavy caps" x="593" y="434">KANCA BOYLARI :</text>
        <text class="heavy" x="759" y="432">L1 = 2 *22/7 (Pİ SAYISI) * r ( YARIÇAP ) * 135/360</text>
        <text class="thin" x="759" y="452">Φ 10 mm için ( iç çap 5*10 = 50 mm )</text>
        <text class="thin" x="759" y="477">Φ 10 mm için (çubuk çapı 10 mm )</text>
        <text class="thin" x="591" y="503">Φ10 luk ETRİYE İÇİN</text>
        <text class="thin" x="759" y="506">r =&#160; 25 mm</text>
        <text class="heavy" x="759" y="530">L1 = 2 *22/7 * 25 * 135/360 = 58.93 mm</text>
        <text class="heavy" x="759" y="555">L2 = 6 * 10 = 60 mm ( en az 80 mm )</text>
        <text class="heavy" x="759" y="580">Toplam kanca boyu = 138.93&#160; mm ( 14 cm )</text>
        <text class="heavy" x="759" y="605">( düz kısım = 8&#160; cm )</text>
        <text class="heavy" x="1307" y="432">L1 = 2 *22/7 (Pİ SAYISI) * r ( YARIÇAP ) * 135/360</text>
        <text class="thin" x="1307" y="452">Φ 8 mm için ( iç çap 5*8 = 40 mm )</text>
        <text class="thin" x="1307" y="477">Φ 8 mm için (çubuk çapı 8 mm )</text>
        <text class="thin" x="1139" y="503">Φ8 lik ETRİYE İÇİN</text>
        <text class="thin" x="1307" y="506">r =&#160; 20 mm</text>
        <text class="heavy" x="1307" y="530">L1 = 2 *22/7 * 20 * 135/360 = 47.14 mm</text>
        <text class="heavy" x="1307" y="555">L2 = 6 * 8 = 48 mm ( en az 80 mm )</text>
        <text class="heavy" x="1307" y="580">Toplam kanca boyu = 127.14&#160; mm ( 13 cm )</text>
        <text class="heavy" x="1307" y="605">( düz kısım = 8 cm )</text>
        <text class="num" x="654" y="553">14</text><text class="num" x="1207" y="534">13</text>
        <text class="axis" x="806" y="718">B</text><text class="axis" x="1738" y="718">D</text>
      </g></svg>
      <section class="coords">
        <h2>Koordinat Kutusu <button aria-label="Kapat"><svg viewBox="0 0 16 16"><path d="M4 4l8 8M12 4l-8 8"/></svg></button></h2>
        <div class="fields">
          <label><input type="checkbox">X</label><input type="text" aria-label="X" value="25419.32 cm"><label for="len">L</label><input id="len" type="text" value="456.12 cm">
          <label><input type="checkbox">Y</label><input type="text" aria-label="Y" value="2989.2 cm"><label for="ang">A</label><input id="ang" type="text" value="142.668">
          <label><input type="checkbox">Z</label><input type="text" aria-label="Z" disabled>
        </div>
      </section>
    </div>
    <label class="cmd">Komut :<input type="text"></label>
    <footer class="status"><span class="mode">BOŞ</span><span class="fillr"></span><span>tf / m</span><span>1 : 100</span><span>% 222</span></footer>
  </div>

  <div class="vcol low">
    <div class="vbar"><i class="grip"></i>
      <button aria-label="Aks"><svg><use href="#gtbl"/></svg></button><button aria-label="Düğümler"><svg><use href="#b-rednodes"/></svg></button><button aria-label="Perde"><svg><use href="#b-panel"/></svg></button><button aria-label="Kolon"><svg><use href="#b-col"/></svg></button><button aria-label="Kiriş"><svg><use href="#b-beam"/></svg></button><button aria-label="Döşeme"><svg><use href="#b-slab"/></svg></button><button aria-label="Kaset"><svg><use href="#b-slabg"/></svg></button><button aria-label="Temel planı"><svg><use href="#b-found"/></svg></button><button aria-label="Temel"><svg><use href="#b-foot"/></svg></button><button aria-label="Radye"><svg><use href="#b-pad"/></svg></button><button aria-label="Sürekli temel"><svg><use href="#b-strip"/></svg></button><button aria-label="Düğüm"><svg><use href="#node"/></svg></button><button aria-label="İstinat"><svg><use href="#b-wall"/></svg></button><button aria-label="L duvar"><svg><use href="#b-lwall"/></svg></button><button aria-label="Makas"><svg><use href="#b-truss"/></svg></button><button aria-label="Kazık"><svg><use href="#b-curt"/></svg></button><button aria-label="Kubbe"><svg><use href="#b-dome"/></svg></button><button aria-label="İskele"><svg><use href="#b-scaf"/></svg></button><button aria-label="Kesit"><svg><use href="#section"/></svg></button><i class="cap"></i>
    </div>
  </div>
  <div class="vcol">
    <div class="vbar"><i class="grip"></i>
      <button aria-label="Tarama"><svg><use href="#c-chk"/></svg></button><button aria-label="Ağ"><svg><use href="#c-mesh"/></svg></button><button aria-label="Döşeme"><svg><use href="#c-slab"/></svg></button><button aria-label="Kaset"><svg><use href="#c-slabg"/></svg></button><i class="sep"></i><button aria-label="Yük"><svg><use href="#c-load"/></svg></button><button aria-label="Kolon"><svg><use href="#c-col"/></svg></button><button aria-label="Başlık"><svg><use href="#c-cap"/></svg></button><button aria-label="Plak"><svg><use href="#c-plate"/></svg></button><button aria-label="Çerçeve"><svg><use href="#c-arch"/></svg></button><i class="sep"></i><button aria-label="Temel"><svg><use href="#c-foot"/></svg></button><button aria-label="Radye"><svg><use href="#c-pad"/></svg></button><button aria-label="Sürekli temel"><svg><use href="#c-strip"/></svg></button><button aria-label="Birleşik temel"><svg><use href="#c-l"/></svg></button><i class="sep"></i><button aria-label="İstinat"><svg><use href="#c-wall"/></svg></button><button aria-label="L duvar"><svg><use href="#c-lwall"/></svg></button><button aria-label="Merdiven"><svg><use href="#c-stairs"/></svg></button><button aria-label="Kazık"><svg><use href="#c-curt"/></svg></button><button aria-label="Kubbe"><svg><use href="#c-dome"/></svg></button><i class="sep"></i><button aria-label="Kesit"><svg><use href="#c-sect"/></svg></button><button aria-label="Pano"><svg><use href="#c-tiles"/></svg></button><i class="cap"></i>
    </div>
    <div class="vbar"><i class="grip"></i>
      <button aria-label="Yapılar"><svg><use href="#g-city"/></svg></button><button aria-label="Katlar"><svg><use href="#g-floors"/></svg></button><button aria-label="Taban"><svg><use href="#g-pad"/></svg></button><i class="cap"></i>
    </div>
  </div>
  <div class="vcol">
    <div class="vbar"><i class="grip"></i>
      <button aria-label="Raporlar"><svg><use href="#d-redc"/></svg></button><i class="sep"></i><button aria-label="Kontrol 1"><svg><use href="#d-chk"/></svg></button><button aria-label="Kontrol 2"><svg><use href="#d-chk"/></svg></button><button aria-label="Kontrol 3"><svg><use href="#d-chk"/></svg></button><button aria-label="Alan raporu"><svg><use href="#d-poly"/></svg></button><button aria-label="Gerilme"><svg><use href="#d-rain"/></svg></button><i class="sep"></i><button aria-label="Yük raporu"><svg><use href="#d-load"/></svg></button><button aria-label="Döşeme raporu"><svg><use href="#d-slab"/></svg></button><button aria-label="Kaset raporu"><svg><use href="#d-grid"/></svg></button><button aria-label="Kolon raporu"><svg><use href="#d-col"/></svg></button><button aria-label="Bağlantı raporu"><svg><use href="#d-horn"/></svg></button><button aria-label="Hacim raporu"><svg><use href="#d-cube"/></svg></button><button aria-label="Temel yükü"><svg><use href="#d-load"/></svg></button><button aria-label="Temel raporu"><svg><use href="#d-foot"/></svg></button><button aria-label="Sürekli temel raporu"><svg><use href="#d-strip"/></svg></button><button aria-label="Radye raporu"><svg><use href="#d-box"/></svg></button><button aria-label="Radye raporu 2"><svg><use href="#d-box"/></svg></button><button aria-label="Kazık raporu"><svg><use href="#d-gate"/></svg></button><i class="sep"></i><button aria-label="Merdiven raporu"><svg><use href="#d-ystair"/></svg></button><button aria-label="Kubbe raporu"><svg><use href="#d-ydome"/></svg></button><button aria-label="İstinat raporu"><svg><use href="#d-wall"/></svg></button><button aria-label="Duvar raporu"><svg><use href="#d-lwall"/></svg></button><i class="sep"></i><button aria-label="İtme raporu"><svg><use href="#d-push"/></svg></button><button aria-label="İtme adımı"><svg><use href="#d-push1"/></svg></button><button aria-label="Bina raporu"><svg><use href="#d-bld"/></svg></button><i class="sep"></i><button aria-label="Grafik raporu"><svg><use href="#d-graph"/></svg></button><i class="sep"></i><button aria-label="Rapor"><svg><use href="#docred"/></svg></button><button aria-label="Düğüm raporu"><svg><use href="#d-node"/></svg></button><i class="cap"></i>
    </div>
    <div class="vbar"><i class="grip"></i>
      <button aria-label="Metraj"><svg><use href="#rulerdoc"/></svg></button><button aria-label="Yön raporu"><svg><use href="#d-arrows"/></svg></button><button aria-label="Yapı raporu"><svg><use href="#d-city"/></svg></button><button aria-label="Kat raporu"><svg><use href="#d-road"/></svg></button><button aria-label="Çerçeve raporu"><svg><use href="#d-frame"/></svg></button><i class="cap"></i>
    </div>
  </div>
</main>
</body>
</html>
```
FILE: styles.css
```css
* { box-sizing: border-box; }
body {
  margin: 0;
  min-height: 100vh;
  display: flex;
  flex-direction: column;
  background: #d0d4dd;
  color: #3f4654;
  font: 11px/13px "Open Sans", "Noto Sans", sans-serif;
}
button {
  margin: 0;
  padding: 0;
  border: 0;
  background: none;
  color: inherit;
  font: inherit;
  display: flex;
  align-items: center;
  justify-content: center;
  flex: none;
}
h1, h2 { margin: 0; font-weight: 400; }
svg { width: 16px; height: 16px; fill: none; stroke: #111; flex: none; display: block; }
.defs { position: absolute; width: 0; height: 0; }
i { font-style: normal; }
.dd {
  display: inline-block;
  width: 7px;
  height: 4px;
  background: #777;
  clip-path: polygon(0 0, 100% 0, 50% 100%);
  vertical-align: middle;
  flex: none;
}
.sep { flex: none; }
.on { background: linear-gradient(#fbd9a0, #fdb74f 50%, #ffe3a0); box-shadow: inset 0 0 0 1px #c8a060; }

/* title bar */
.title { position: relative; height: 24px; display: flex; align-items: flex-start; background: #fff; color: #111; }
.app {
  position: absolute;
  z-index: 2;
  left: 3px;
  top: 2px;
  width: 36px;
  height: 36px;
  border-radius: 50%;
  background: radial-gradient(circle at 50% 30%, #fff, #e4e4e6 60%, #b4b6ba);
  border: 2px solid #8b8e94;
  box-shadow: 0 0 0 2px #e8eaee;
  color: #555;
  font-size: 9px;
  overflow: hidden;
}
.app b { color: #e02020; font-weight: 700; }
.quick {
  margin-left: 45px;
  height: 22px;
  display: flex;
  align-items: center;
  padding: 0 8px 0 4px;
  background: linear-gradient(#f2f4f8, #e2e6ec);
  border-bottom: 1px solid #b8bec8;
  border-right: 1px solid #b8bec8;
  border-radius: 0 12px 12px 0;
}
.quick button { width: 22px; height: 21px; }
.quick .sep { width: 6px; height: 16px; border-left: 1px solid #b0b6c0; margin-left: 1px; }
.quick .dd { margin: 0 2px; }
.more { width: 22px; height: 22px; margin-left: -8px; }
.title h1 { font-size: 12px; line-height: 22px; white-space: pre; margin-left: 106px; }
.title h1.second { margin-left: 48px; }
.wins { margin-left: auto; display: flex; gap: 30px; padding: 3px 17px 0 0; }

/* tabs */
.tabs { height: 22px; display: flex; align-items: center; padding-left: 62px; }
.tabs a { color: inherit; text-decoration: none; line-height: 20px; font-size: 11px; margin-right: 28px; }
.tabs a.active {
  margin: 2px 0 0 -12px;
  padding: 0 12px;
  border: 1px solid #b4bcc6;
  border-bottom: 0;
  border-radius: 3px 3px 0 0;
  background: linear-gradient(#c4dde2, #eef5f6);
}
.search { margin-left: auto; width: 213px; height: 22px; display: flex; align-items: center; background: #fff; border: 1px solid #b8bec8; }
.search svg { width: 14px; height: 14px; stroke: #999; margin: 0 2px; }
.search input { flex: 1; min-width: 0; border: 0; padding: 0; height: 20px; font: italic 12px "Liberation Sans", sans-serif; }
.search input::placeholder { color: #7c8088; opacity: 1; }
.search .dd { margin: 0 4px; }
.tabs > .sep { width: 5px; height: 14px; border-left: 1px solid #a8aeb8; margin-left: 1px; }
.tabs > button { width: 23px; height: 20px; }
.layer { width: 134px; height: 22px; margin-left: 1px; display: flex; align-items: center; background: #e4e6ea; border: 1px solid #b8bec8; color: #111; }
.layer svg { width: 12px; height: 16px; margin-left: 2px; }
.layer select { flex: 1; appearance: none; border: 0; background: none; padding: 0 0 0 4px; font: 11px "Open Sans", sans-serif; }
.layer .dd { margin-right: 3px; }
.tabs > .view { width: 72px; gap: 10px; color: #555; }
.tabs > .mdi { width: 19px; }
.mdi svg { stroke: #777; stroke-width: 2; }
.tabs > .dd { margin: 0 2px 0 4px; }

/* ribbon */
.ribbon {
  height: 90px;
  display: flex;
  gap: 3px;
  padding: 2px 22px 2px 4px;
  margin-right: 2px;
  background: linear-gradient(#cfe2e8, #f0f3f7 8px, #fafbfc);
  border-bottom: 1px solid #aab0ba;
  border-radius: 0 0 4px 0;
}
.panel {
  flex: 1 1 0;
  min-width: 0;
  display: flex;
  flex-direction: column;
  border: 1px solid #a4a9b1;
  border-radius: 3px;
  overflow: hidden;
  background: linear-gradient(#f3f7f9, #fdfdfe);
}
.g149 { flex-grow: 149; } .g185 { flex-grow: 185; } .g207 { flex-grow: 207; } .g315 { flex-grow: 315; }
.g170 { flex-grow: 170; } .g136 { flex-grow: 136; } .g74 { flex-grow: 74; } .g187 { flex-grow: 187; }
.g91 { flex-grow: 91; } .g83 { flex-grow: 83; } .g76 { flex-grow: 76; } .g73 { flex-grow: 73; } .g107 { flex-grow: 107; }
.body { flex: 1; display: flex; justify-content: center; }
.panel h2 { height: 16px; font-size: 11px; line-height: 16px; text-align: center; white-space: nowrap; background: linear-gradient(#e6e8f0, #cfd4de); }
.big { flex-direction: column; justify-content: flex-start; padding-top: 4px; white-space: nowrap; text-align: center; }
.big svg { width: 32px; height: 32px; }
.big span { margin-top: 3px; }
.s { width: 43px; } .m { width: 50px; } .l { width: 62px; } .xl { width: 72px; }
.dim { color: #8d939d; }
.col { width: 26px; padding-top: 1px; }
.col button { width: 26px; height: 22px; }
.drops { width: 8px; display: flex; flex-direction: column; padding-top: 1px; }
.drops i { margin: 9px 0; height: 4px; }
.body .sep { width: 8px; margin: 6px 0; background: linear-gradient(#c4c8ce, #c4c8ce) center / 1px 100% no-repeat; }

/* docked toolbars */
.hbars { height: 27px; display: flex; padding-top: 2px; }
.hbar { height: 24px; display: flex; align-items: center; background: linear-gradient(#eef1f7, #ccd2de); border-radius: 3px; overflow: hidden; }
.hbar button { width: 22px; height: 24px; }
.hbar .grip { width: 3px; height: 14px; margin: 0 3px; border-left: 2px dotted #a4aab4; }
.hbar .sep { width: 8px; height: 14px; background: linear-gradient(#b0b6c0, #b0b6c0) center / 1px 100% no-repeat; }
.hbar .cap { width: 10px; align-self: stretch; margin-left: 4px; background: #b0b5be; position: relative; }
.hbar .cap::after { content: ""; position: absolute; left: 2px; bottom: 3px; width: 6px; height: 4px; background: #fff; clip-path: polygon(0 0, 100% 0, 50% 100%); }

.work { flex: 1; display: flex; min-height: 0; }
.vcol { width: 26px; padding-left: 1px; }
.vcol.low { padding-top: 25px; }
.vbar { width: 24px; display: flex; flex-direction: column; align-items: center; background: linear-gradient(90deg, #eef1f8, #ccd2de); border-radius: 3px; overflow: hidden; }
.vbar button { width: 24px; height: 21px; }
.vbar .grip { width: 14px; height: 2px; margin: 4px 0; border-top: 2px dotted #a4aab4; }
.vbar .sep { width: 14px; height: 8px; background: linear-gradient(#a8aeb8 50%, #fff 50%) center / 100% 2px no-repeat; }
.vbar .cap { width: 24px; height: 12px; margin-top: 1px; background: #b0b5be; position: relative; }
.vbar .cap::after { content: ""; position: absolute; right: 3px; top: 3px; width: 5px; height: 6px; border-left: 1px solid #fff; background: #888; clip-path: polygon(0 0, 100% 50%, 0 100%); }

.center { flex: 1; min-width: 0; display: flex; flex-direction: column; }
.canvas { flex: 1; position: relative; overflow: hidden; background: #2c0c07; border: 2px solid #e8ebf0; border-top-color: #b4bac4; }
.drawing { width: 100%; height: 100%; position: absolute; inset: 0; }
.detail { width: 310px; height: 340px; }
.px { shape-rendering: crispEdges; }
.px3 { stroke-width: 3; }
.bl { stroke: #00f; } .cy { stroke: #0ff; } .mg { stroke: #f0f; } .rd { stroke: #f00; } .ye { stroke: #ff0; } .sg { stroke: #9cbfa8; }
.dot { fill: #0ff; stroke: none; }
.rdf { fill: #f00; stroke: none; }
.drawing text { stroke: none; fill: #fff; white-space: pre; }
.drawing .heavy { font: 700 16px Roboto, "Liberation Sans", sans-serif; fill: #f0f; stroke: #f0f; stroke-width: 1; }
.drawing .caps { font-size: 15px; }
.drawing .thin { font: 14px "Liberation Sans", sans-serif; fill: #e800e8; }
.drawing .green { font: 7px "DejaVu Sans", sans-serif; fill: #0c0; }
.drawing .small { font: 8px "DejaVu Sans", sans-serif; }
.drawing .serif { font: 10px "Liberation Serif", serif; }
.drawing .tiny { font-size: 6px; }
.drawing .noto { font: 10px "Open Sans", sans-serif; }
.drawing .fat { font: 700 15px "Liberation Sans", sans-serif; fill: #f0f; stroke: #f0f; stroke-width: 1; }
.drawing .num { font: 700 9px "Open Sans", sans-serif; fill: #ff0; }
.drawing .axis { font: 14px "Liberation Sans", sans-serif; fill: #ff0; text-anchor: middle; }

.coords { position: absolute; top: 46px; right: 89px; width: 192px; padding: 3px 4px 4px; background: #f0f0f0; border: 1px solid #8c929c; box-shadow: inset 1px 1px #fff; color: #222; }
.coords h2 { height: 23px; padding: 0 0 0 2px; display: flex; align-items: center; justify-content: space-between; background: #b8c0cb; color: #4c5058; font-size: 11px; font-weight: 600; }
.coords h2 svg { stroke: #777; }
.fields { display: grid; grid-template-columns: 27px 64px 21px 64px; column-gap: 2px; row-gap: 3px; padding-top: 2px; }
.fields label { display: flex; align-items: center; font-size: 11px; }
.fields label[for] { padding-left: 4px; }
.fields input[type="checkbox"] { width: 12px; height: 12px; margin: 0 1px 4px 1px; }
.fields input[type="text"] { height: 18px; min-width: 0; border: 0; border-bottom: 1px solid #888; padding: 0 0 0 5px; background: #fff; font: 11px "Open Sans", sans-serif; color: #111; }
.fields input[type="text"]:disabled { background: #f0f0f0; }

.cmd { margin-top: 4px; height: 25px; display: flex; align-items: flex-start; gap: 4px; background: #f0f0f0; color: #111; font-size: 11px; line-height: 14px; border-bottom: 1px solid #a8acb4; }
.cmd input { flex: 1; border: 0; background: none; }
.status { height: 19px; display: flex; background: linear-gradient(#dcdfe5, #b4bac6 50%, #b4b9c1); line-height: 20px; color: #333; }
.status span { width: 76px; padding-left: 4px; border-left: 1px solid #878c95; }
.status .mode { width: 258px; padding-left: 6px; border-left: 0; }
.status .fillr { width: auto; flex: 1; }
```
